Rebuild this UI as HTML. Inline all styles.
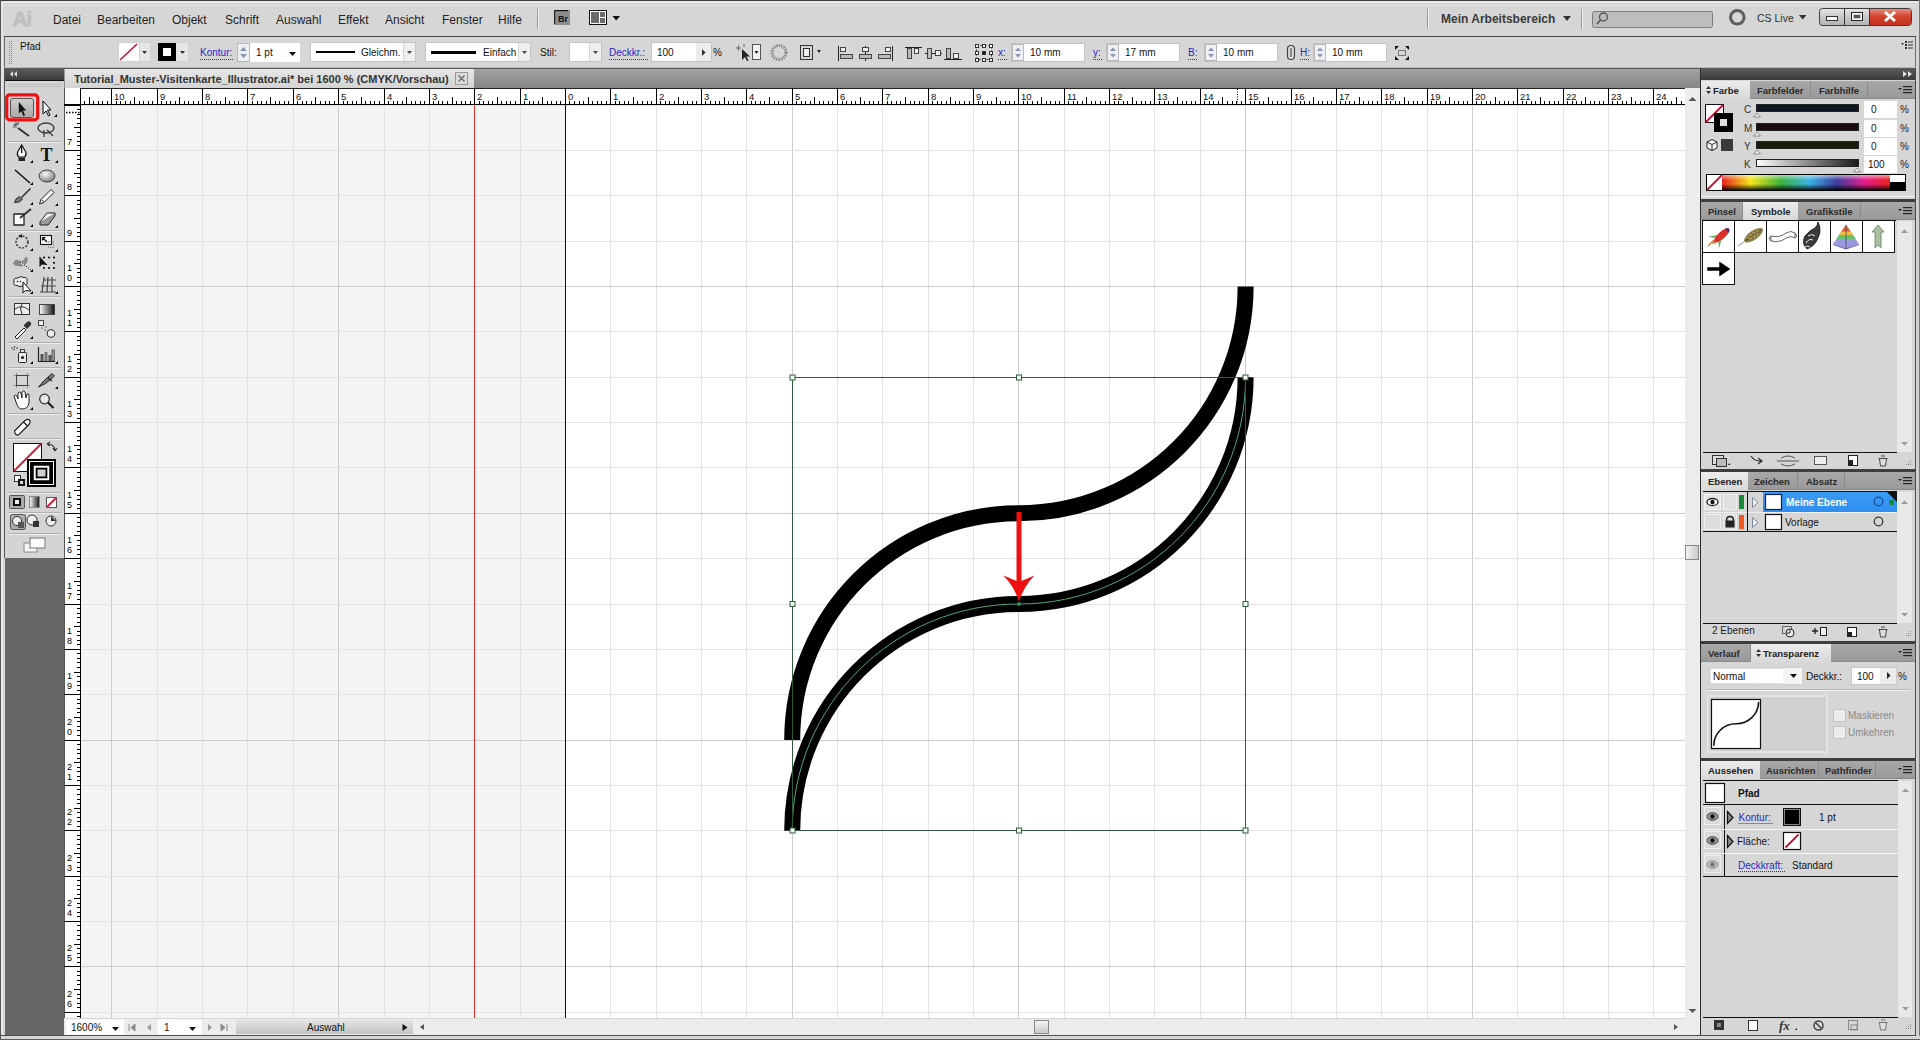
<!DOCTYPE html><html><head><meta charset="utf-8"><style>
html,body{margin:0;padding:0;width:1920px;height:1040px;overflow:hidden;background:#d6d6d6}
div{position:absolute;box-sizing:border-box}
.t{white-space:nowrap;font-family:"Liberation Sans",sans-serif;line-height:1}
body{font-family:"Liberation Sans",sans-serif}
</style></head><body>
<div style="left:0px;top:0px;width:1920px;height:1040px;background:#d6d6d6"></div>
<div style="left:0px;top:0px;width:1920px;height:1px;background:#3a3a3a"></div>
<div style="left:1px;top:1px;width:1918px;height:2px;background:#eaeaea"></div>
<div style="left:3px;top:5px;width:1913px;height:1px;background:#e4e4e4"></div>
<div style="left:0px;top:0px;width:1px;height:1040px;background:#555"></div>
<div style="left:1px;top:1px;width:2px;height:1034px;background:#e6e6e6"></div>
<div style="left:1919px;top:0px;width:1px;height:1040px;background:#777"></div>
<div class="t" style="left:53px;top:14px;font-size:12px;color:#1e1e1e">Datei</div>
<div class="t" style="left:97px;top:14px;font-size:12px;color:#1e1e1e">Bearbeiten</div>
<div class="t" style="left:172px;top:14px;font-size:12px;color:#1e1e1e">Objekt</div>
<div class="t" style="left:225px;top:14px;font-size:12px;color:#1e1e1e">Schrift</div>
<div class="t" style="left:276px;top:14px;font-size:12px;color:#1e1e1e">Auswahl</div>
<div class="t" style="left:338px;top:14px;font-size:12px;color:#1e1e1e">Effekt</div>
<div class="t" style="left:385px;top:14px;font-size:12px;color:#1e1e1e">Ansicht</div>
<div class="t" style="left:442px;top:14px;font-size:12px;color:#1e1e1e">Fenster</div>
<div class="t" style="left:498px;top:14px;font-size:12px;color:#1e1e1e">Hilfe</div>
<svg width="1920" height="68" viewBox="0 0 1920 68" style="position:absolute;left:0;top:0"><defs><linearGradient id="sb" x1="0" y1="0" x2="0" y2="1"><stop offset="0" stop-color="#b4b4b4"/><stop offset="1" stop-color="#cfcfcf"/></linearGradient><linearGradient id="wb" x1="0" y1="0" x2="0" y2="1"><stop offset="0" stop-color="#e6e6e6"/><stop offset="0.5" stop-color="#c9c9c9"/><stop offset="1" stop-color="#b2b2b2"/></linearGradient><linearGradient id="cb" x1="0" y1="0" x2="0" y2="1"><stop offset="0" stop-color="#e88a7a"/><stop offset="0.5" stop-color="#d2412c"/><stop offset="1" stop-color="#c2321e"/></linearGradient><linearGradient id="brg" x1="0" y1="0" x2="0" y2="1"><stop offset="0" stop-color="#9a9a9a"/><stop offset="1" stop-color="#6a6a6a"/></linearGradient></defs><text x="12.5" y="26" font-family="Liberation Sans" font-weight="bold" font-size="21" fill="#c2c2c2" stroke="#b0b0b0" stroke-width="0.4" letter-spacing="-1.5">Ai</text><rect x="537" y="9" width="1" height="20" fill="#9a9a9a"/><rect x="538" y="9" width="1" height="20" fill="#f0f0f0"/><rect x="554" y="10" width="16" height="15" fill="#8e8e8e"/><rect x="554" y="10" width="14" height="1.2" fill="#111"/><rect x="554" y="10" width="1.2" height="14" fill="#222"/><text x="558" y="21.5" font-family="Liberation Sans" font-weight="bold" font-size="9" fill="#111">Br</text><rect x="589.5" y="10.5" width="17" height="14" fill="#fff" stroke="#111"/><rect x="591" y="12" width="8" height="11" fill="#6a6a6a"/><rect x="600" y="12" width="5" height="5" fill="#6a6a6a"/><rect x="600" y="18" width="5" height="5" fill="#6a6a6a"/><path d="M612.5,16 L620,16 L616.2,20.5Z" fill="#111"/><rect x="1427" y="9" width="1" height="20" fill="#9a9a9a"/><rect x="1428" y="9" width="1" height="20" fill="#f0f0f0"/><path d="M1563,16 L1571,16 L1567,21Z" fill="#333"/><rect x="1581" y="9" width="1" height="20" fill="#9a9a9a"/><rect x="1582" y="9" width="1" height="20" fill="#f0f0f0"/><rect x="1592.5" y="11.5" width="120" height="16" rx="2" fill="#bdbdbd" stroke="#7c7c7c"/><circle cx="1603.5" cy="17" r="4" fill="none" stroke="#555" stroke-width="1.3"/><path d="M1600.5,20 L1597,24" stroke="#555" stroke-width="1.6"/><circle cx="1737.3" cy="17.3" r="6.8" fill="none" stroke="#5c5c5c" stroke-width="3"/><path d="M1799,15 L1806.5,15 L1802.7,19.5Z" fill="#333"/><rect x="1819.5" y="8.5" width="92" height="17" rx="3" fill="url(#wb)" stroke="#3c3c3c"/><path d="M1870,9 L1909,9 Q1911,9 1911,11 L1911,23 Q1911,25 1909,25 L1870,25Z" fill="url(#cb)"/><rect x="1844" y="9" width="1" height="16" fill="#333"/><rect x="1869" y="9" width="1" height="16" fill="#333"/><rect x="1826.5" y="16.5" width="11" height="4" fill="#fff" stroke="#333"/><rect x="1851.5" y="12.5" width="11" height="8" fill="none" stroke="#222" stroke-width="1"/><rect x="1852.5" y="13.5" width="9" height="6" fill="none" stroke="#fff" stroke-width="1"/><rect x="1854" y="15" width="6" height="3" fill="#555"/><path d="M1885,12 L1895,21 M1895,12 L1885,21" stroke="#fff" stroke-width="3"/><rect x="4" y="36" width="1912" height="1" fill="#484848"/><rect x="4" y="37" width="1" height="31" fill="#6a6a6a"/><rect x="1915" y="37" width="1" height="31" fill="#6a6a6a"/><rect x="4" y="67" width="1912" height="1" fill="#b8b8b8"/><rect x="9" y="41" width="1" height="1" fill="#888"/><rect x="11" y="41" width="1" height="1" fill="#888"/><rect x="9" y="43" width="1" height="1" fill="#888"/><rect x="11" y="43" width="1" height="1" fill="#888"/><rect x="9" y="45" width="1" height="1" fill="#888"/><rect x="11" y="45" width="1" height="1" fill="#888"/><rect x="9" y="47" width="1" height="1" fill="#888"/><rect x="11" y="47" width="1" height="1" fill="#888"/><rect x="9" y="49" width="1" height="1" fill="#888"/><rect x="11" y="49" width="1" height="1" fill="#888"/><rect x="9" y="51" width="1" height="1" fill="#888"/><rect x="11" y="51" width="1" height="1" fill="#888"/><rect x="9" y="53" width="1" height="1" fill="#888"/><rect x="11" y="53" width="1" height="1" fill="#888"/><rect x="9" y="55" width="1" height="1" fill="#888"/><rect x="11" y="55" width="1" height="1" fill="#888"/><rect x="9" y="57" width="1" height="1" fill="#888"/><rect x="11" y="57" width="1" height="1" fill="#888"/><rect x="9" y="59" width="1" height="1" fill="#888"/><rect x="11" y="59" width="1" height="1" fill="#888"/><rect x="9" y="61" width="1" height="1" fill="#888"/><rect x="11" y="61" width="1" height="1" fill="#888"/><rect x="9" y="63" width="1" height="1" fill="#888"/><rect x="11" y="63" width="1" height="1" fill="#888"/><text x="20" y="50" font-family="Liberation Sans" font-size="10" fill="#111">Pfad</text><rect x="118.5" y="42.5" width="32" height="19" fill="#e6e6e6" stroke="#c4c4c4" stroke-dasharray="1,1"/><rect x="119" y="43" width="20" height="18" fill="#fff"/><path d="M120,60 L137,44" stroke="#c8102e" stroke-width="1.6"/><rect x="139" y="43" width="1" height="18" fill="#cfcfcf"/><path d="M142,51 L147,51 L144.5,54Z" fill="#333"/><rect x="157.5" y="42.5" width="31" height="19" fill="#e6e6e6" stroke="#c4c4c4" stroke-dasharray="1,1"/><rect x="158" y="43" width="18" height="18" fill="#000"/><rect x="163" y="48" width="8" height="8" fill="#fff"/><path d="M180,51 L185,51 L182.5,54Z" fill="#333"/><text x="200" y="56" font-family="Liberation Sans" font-size="10" fill="#2929c8">Kontur:</text><path d="M200,59.5 L234,59.5" stroke="#2929c8" stroke-dasharray="1,1"/><rect x="237" y="43" width="63" height="19" fill="#fff"/><rect x="237.5" y="43.5" width="12" height="18" fill="#eef0f4" stroke="#b8b8b8"/><path d="M240,51 L247,51 L243.5,47Z M240,54 L247,54 L243.5,58Z" fill="#8a94b0"/><text x="256" y="56" font-family="Liberation Sans" font-size="10" fill="#111">1 pt</text><path d="M289,52 L296,52 L292.5,56Z" fill="#111"/><rect x="310.5" y="42.5" width="105" height="19" fill="#fff" stroke="#c4c4c4"/><rect x="316" y="51" width="39" height="2" fill="#000"/><text x="361" y="56" font-family="Liberation Sans" font-size="10" fill="#111">Gleichm.</text><rect x="403" y="43" width="1" height="18" fill="#d4d4d4"/><rect x="404" y="43" width="11" height="18" fill="#efefef"/><path d="M407,51 L412,51 L409.5,54Z" fill="#444"/><rect x="425.5" y="42.5" width="105" height="19" fill="#fff" stroke="#c4c4c4"/><rect x="431" y="51" width="45" height="3" fill="#000"/><text x="483" y="56" font-family="Liberation Sans" font-size="10" fill="#111">Einfach</text><rect x="518" y="43" width="1" height="18" fill="#d4d4d4"/><rect x="519" y="43" width="11" height="18" fill="#efefef"/><path d="M522,51 L527,51 L524.5,54Z" fill="#444"/><text x="540" y="56" font-family="Liberation Sans" font-size="10" fill="#111">Stil:</text><rect x="569.5" y="42.5" width="32" height="19" fill="#fff" stroke="#c4c4c4"/><rect x="589" y="43" width="1" height="18" fill="#d4d4d4"/><rect x="590" y="43" width="11" height="18" fill="#efefef"/><path d="M593,51 L598,51 L595.5,54Z" fill="#444"/><text x="609" y="56" font-family="Liberation Sans" font-size="10" fill="#2929c8">Deckkr.:</text><path d="M609,59.5 L648,59.5" stroke="#2929c8" stroke-dasharray="1,1"/><rect x="651.5" y="42.5" width="60" height="19" fill="#fff" stroke="#c4c4c4"/><rect x="696" y="43" width="15" height="18" fill="#ececec"/><path d="M702,49 L702,56 L705.5,52.5Z" fill="#333"/><text x="657" y="56" font-family="Liberation Sans" font-size="10" fill="#111">100</text><text x="713" y="56" font-family="Liberation Sans" font-size="10" fill="#111">%</text><path d="M736,48 L741,48 M738.5,45.5 L738.5,50.5 M744,44 L744,47" stroke="#666"/><path d="M742,49 L742,60 L745,57 L747,61 L748.5,60.5 L746.5,56.5 L750,56.5Z" fill="#222"/><rect x="752.5" y="44.5" width="8" height="15" fill="#f4f4f4" stroke="#555"/><path d="M754.5,51 L758.5,51 L756.5,54Z" fill="#222"/><circle cx="779" cy="52.5" r="7" fill="none" stroke="#8a8a8a" stroke-width="3" stroke-dasharray="1.5,1"/><rect x="800.5" y="45.5" width="12" height="14" fill="none" stroke="#333"/><rect x="803.5" y="48.5" width="6" height="8" fill="#eee" stroke="#333"/><path d="M817,50 L821,50 L819,53Z" fill="#222"/><rect x="838" y="46" width="1" height="15" fill="#222"/><rect x="840.5" y="47.5" width="5" height="4" fill="#eee" stroke="#444"/><rect x="840.5" y="54.5" width="12" height="4" fill="#bbb" stroke="#444"/><rect x="865" y="46" width="1" height="15" fill="#222"/><rect x="862.5" y="47.5" width="6" height="4" fill="#eee" stroke="#444"/><rect x="859.5" y="54.5" width="12" height="4" fill="#bbb" stroke="#444"/><rect x="892" y="46" width="1" height="15" fill="#222"/><rect x="885.5" y="47.5" width="5" height="4" fill="#eee" stroke="#444"/><rect x="878.5" y="54.5" width="12" height="4" fill="#bbb" stroke="#444"/><rect x="905" y="47" width="17" height="1" fill="#222"/><rect x="907.5" y="48.5" width="4" height="10" fill="#bbb" stroke="#444"/><rect x="914.5" y="48.5" width="4" height="5" fill="#eee" stroke="#444"/><rect x="925" y="53" width="17" height="1" fill="#222"/><rect x="927.5" y="48.5" width="4" height="10" fill="#bbb" stroke="#444"/><rect x="935.5" y="50.5" width="5" height="5" fill="#eee" stroke="#444"/><rect x="944" y="59" width="18" height="1" fill="#222"/><rect x="946.5" y="48.5" width="4" height="10" fill="#bbb" stroke="#444"/><rect x="953.5" y="53.5" width="5" height="5" fill="#eee" stroke="#444"/><rect x="976.5" y="45.5" width="15" height="14" fill="none" stroke="#333" stroke-dasharray="2,2"/><rect x="975.5" y="44.5" width="3" height="3" fill="#fff" stroke="#333"/><rect x="975.5" y="51.5" width="3" height="3" fill="#fff" stroke="#333"/><rect x="975.5" y="58.5" width="3" height="3" fill="#fff" stroke="#333"/><rect x="982.5" y="44.5" width="3" height="3" fill="#fff" stroke="#333"/><rect x="982.5" y="51.5" width="3" height="3" fill="#111" stroke="#333"/><rect x="982.5" y="58.5" width="3" height="3" fill="#fff" stroke="#333"/><rect x="989.5" y="44.5" width="3" height="3" fill="#fff" stroke="#333"/><rect x="989.5" y="51.5" width="3" height="3" fill="#fff" stroke="#333"/><rect x="989.5" y="58.5" width="3" height="3" fill="#fff" stroke="#333"/><text x="998" y="56" font-family="Liberation Sans" font-size="10" fill="#2929c8">x:</text><path d="M998,59.5 L1007,59.5" stroke="#2929c8" stroke-dasharray="1,1"/><rect x="1011.5" y="43.5" width="73" height="18" fill="#fff" stroke="#c4c4c4"/><rect x="1012.5" y="44.5" width="11" height="16" fill="#eef0f4" stroke="#b8b8b8"/><path d="M1015,51 L1021,51 L1018,47.5Z M1015,54 L1021,54 L1018,57.5Z" fill="#8a94b0"/><text x="1030" y="56" font-family="Liberation Sans" font-size="10" fill="#111">10 mm</text><text x="1093" y="56" font-family="Liberation Sans" font-size="10" fill="#2929c8">y:</text><path d="M1093,59.5 L1102,59.5" stroke="#2929c8" stroke-dasharray="1,1"/><rect x="1106.5" y="43.5" width="73" height="18" fill="#fff" stroke="#c4c4c4"/><rect x="1107.5" y="44.5" width="11" height="16" fill="#eef0f4" stroke="#b8b8b8"/><path d="M1110,51 L1116,51 L1113,47.5Z M1110,54 L1116,54 L1113,57.5Z" fill="#8a94b0"/><text x="1125" y="56" font-family="Liberation Sans" font-size="10" fill="#111">17 mm</text><text x="1188" y="56" font-family="Liberation Sans" font-size="10" fill="#2929c8">B:</text><path d="M1188,59.5 L1197,59.5" stroke="#2929c8" stroke-dasharray="1,1"/><rect x="1204.5" y="43.5" width="73" height="18" fill="#fff" stroke="#c4c4c4"/><rect x="1205.5" y="44.5" width="11" height="16" fill="#eef0f4" stroke="#b8b8b8"/><path d="M1208,51 L1214,51 L1211,47.5Z M1208,54 L1214,54 L1211,57.5Z" fill="#8a94b0"/><text x="1223" y="56" font-family="Liberation Sans" font-size="10" fill="#111">10 mm</text><text x="1300" y="56" font-family="Liberation Sans" font-size="10" fill="#2929c8">H:</text><path d="M1300,59.5 L1309,59.5" stroke="#2929c8" stroke-dasharray="1,1"/><rect x="1313.5" y="43.5" width="73" height="18" fill="#fff" stroke="#c4c4c4"/><rect x="1314.5" y="44.5" width="11" height="16" fill="#eef0f4" stroke="#b8b8b8"/><path d="M1317,51 L1323,51 L1320,47.5Z M1317,54 L1323,54 L1320,57.5Z" fill="#8a94b0"/><text x="1332" y="56" font-family="Liberation Sans" font-size="10" fill="#111">10 mm</text><rect x="1287.5" y="45.5" width="7" height="14" rx="3.5" fill="#ddd" stroke="#444" stroke-width="1.2"/><rect x="1290" y="48" width="2" height="9" fill="#888"/><path d="M1395,46 L1399,46 L1395,50Z M1409,46 L1405,46 L1409,50Z M1395,60 L1399,60 L1395,56Z M1409,60 L1405,60 L1409,56Z" fill="#111"/><rect x="1398.5" y="50.5" width="7" height="5" fill="none" stroke="#777"/><path d="M1901,43 L1904,43 L1902.5,45Z" fill="#333"/><rect x="1905" y="41" width="2" height="2" fill="#333"/><rect x="1908" y="41.5" width="5" height="1" fill="#333"/><rect x="1905" y="44" width="2" height="2" fill="#333"/><rect x="1908" y="44.5" width="5" height="1" fill="#333"/><rect x="1905" y="47" width="2" height="2" fill="#333"/><rect x="1908" y="47.5" width="5" height="1" fill="#333"/></svg>
<div class="t" style="left:1441px;top:13px;font-weight:bold;font-size:12px;color:#3a3a3a">Mein Arbeitsbereich</div>
<div class="t" style="left:1757px;top:13px;font-size:10.5px;color:#333">CS Live</div>
<div style="left:5px;top:558px;width:59px;height:477px;background:#666666"></div>
<svg width="60" height="490" viewBox="4 68 60 490" style="position:absolute;left:4px;top:68px"><defs><linearGradient id="tg" x1="0" y1="0" x2="0" y2="1"><stop offset="0" stop-color="#e8e8e8"/><stop offset="1" stop-color="#a8a8a8"/></linearGradient><linearGradient id="bg1" x1="0" y1="0" x2="0" y2="1"><stop offset="0" stop-color="#b8b8b8"/><stop offset="1" stop-color="#8e8e8e"/></linearGradient><radialGradient id="rg1" cx="0.4" cy="0.35" r="0.7"><stop offset="0" stop-color="#fafafa"/><stop offset="1" stop-color="#7a7a7a"/></radialGradient></defs><rect x="4" y="68" width="60" height="490" fill="#d4d4d4"/><rect x="4" y="68" width="1" height="490" fill="#5a5a5a"/><defs><linearGradient id="thd" x1="0" y1="0" x2="0" y2="1"><stop offset="0" stop-color="#5e5e5e"/><stop offset="1" stop-color="#3c3c3c"/></linearGradient><linearGradient id="selb" x1="0" y1="0" x2="0" y2="1"><stop offset="0" stop-color="#cfcfcf"/><stop offset="1" stop-color="#a9a9a9"/></linearGradient></defs><rect x="5" y="68" width="59" height="12" fill="url(#thd)"/><rect x="5" y="80" width="59" height="1" fill="#111"/><path d="M10,74 L13,71 L13,77Z M14,74 L17,71 L17,77Z" fill="#ddd"/><rect x="8" y="84" width="54" height="1" fill="#bdbdbd"/><rect x="8" y="86" width="54" height="1" fill="#bdbdbd"/><rect x="8" y="141" width="53" height="1" fill="#b0b0b0"/><rect x="8" y="142" width="53" height="1" fill="#ececec"/><rect x="8" y="230" width="53" height="1" fill="#b0b0b0"/><rect x="8" y="231" width="53" height="1" fill="#ececec"/><rect x="8" y="296" width="53" height="1" fill="#b0b0b0"/><rect x="8" y="297" width="53" height="1" fill="#ececec"/><rect x="8" y="342" width="53" height="1" fill="#b0b0b0"/><rect x="8" y="343" width="53" height="1" fill="#ececec"/><rect x="8" y="367" width="53" height="1" fill="#b0b0b0"/><rect x="8" y="368" width="53" height="1" fill="#ececec"/><rect x="8" y="413" width="53" height="1" fill="#b0b0b0"/><rect x="8" y="414" width="53" height="1" fill="#ececec"/><rect x="8" y="438" width="53" height="1" fill="#b0b0b0"/><rect x="8" y="439" width="53" height="1" fill="#ececec"/><rect x="8" y="492" width="53" height="1" fill="#b0b0b0"/><rect x="8" y="493" width="53" height="1" fill="#ececec"/><rect x="8" y="512" width="53" height="1" fill="#b0b0b0"/><rect x="8" y="513" width="53" height="1" fill="#ececec"/><rect x="8" y="533" width="53" height="1" fill="#b0b0b0"/><rect x="8" y="534" width="53" height="1" fill="#ececec"/><rect x="6.7" y="94.8" width="31" height="25" rx="3" fill="none" stroke="#f01010" stroke-width="3.2"/><rect x="10.5" y="98.5" width="23" height="19" rx="2.5" fill="url(#selb)" stroke="#555"/><path d="M18.8,102 L18.8,113.5 L21.3,111.2 L23.4,116 L25,115.2 L23,110.5 L26.2,110.5Z" fill="#111"/><path d="M43,101 L43,114 L46,111 L48.5,116 L50,115 L47.5,110 L51,110Z" fill="#fff" stroke="#000" stroke-width="1"/><path d="M54,117 L57,117 L57,114Z" fill="#000"/><path d="M18,128 L29,136" stroke="#333" stroke-width="2"/><path d="M13,125 L19,124 M16,121 L16,128 M13,128 L19,122" stroke="#555" stroke-width="1"/><ellipse cx="46" cy="128" rx="8" ry="5" fill="none" stroke="#333" stroke-width="1.3"/><path d="M44,130 L44,137 M47,130 L53,136" stroke="#333" stroke-width="1.2"/><path d="M21.7,145 L25.5,151.5 Q27,154.5 24.8,157 L18.6,157 Q16.4,154.5 17.9,151.5Z" fill="#fafafa" stroke="#111" stroke-width="1.2"/><path d="M21.7,146 L21.7,153" stroke="#111" stroke-width="1.3"/><rect x="18.5" y="157.5" width="6.5" height="3.5" fill="#222"/><path d="M30,163 L33,163 L33,160Z" fill="#000"/><text x="40.5" y="160.5" font-family="Liberation Serif" font-weight="bold" font-size="18" fill="#111">T</text><path d="M55,163 L58,163 L58,160Z" fill="#000"/><path d="M15,170 L30,183" stroke="#111" stroke-width="1.6"/><path d="M30,185 L33,185 L33,182Z" fill="#000"/><ellipse cx="47" cy="176" rx="8" ry="6" fill="url(#rg1)" stroke="#444"/><path d="M55,184 L58,184 L58,181Z" fill="#000"/><path d="M30.5,188.5 L21.5,197.5" stroke="#333" stroke-width="1.6"/><path d="M14.5,202.5 Q15,198.5 19.5,196.5 L22.5,199 Q20,203 14.5,202.5Z" fill="#777" stroke="#222" stroke-width="0.9"/><path d="M30,205 L33,205 L33,202Z" fill="#000"/><path d="M39.5,204 L41,199.5 L51,189.5 L54,192.5 L44,202.5Z" fill="#f4f4f4" stroke="#222" stroke-width="1"/><path d="M41.5,199.5 L44,202" stroke="#222" stroke-width="0.8"/><path d="M55,206 L58,206 L58,203Z" fill="#000"/><path d="M14,214 L24,214 L24,225 L14,225Z" fill="#fff" stroke="#222" stroke-width="1.3"/><path d="M20,218 L31,209" stroke="#333" stroke-width="2"/><path d="M30,227 L33,227 L33,224Z" fill="#000"/><path d="M40,222 L47,213 L55,213 L48,222Z" fill="#f6f6f6" stroke="#222"/><path d="M40,222 L40,225 L48,225 L55,216 L55,213" fill="#999" stroke="#222"/><path d="M55,228 L58,228 L58,225Z" fill="#000"/><circle cx="22" cy="242" r="6" fill="none" stroke="#333" stroke-width="1.5" stroke-dasharray="2,1.5"/><path d="M18,236 L22,234 L22,238Z" fill="#222"/><path d="M30,251 L33,251 L33,248Z" fill="#000"/><rect x="40.5" y="235.5" width="11" height="9" fill="#f6f6f6" stroke="#111" stroke-width="1.1"/><path d="M47,242 L42.5,237.5 M42.5,237.5 L42.5,240.5 M42.5,237.5 L45.5,237.5" stroke="#111" stroke-width="1.2" fill="none"/><rect x="48.5" y="241.5" width="5" height="6" fill="none" stroke="#777" stroke-dasharray="1,1"/><path d="M55,252 L58,252 L58,249Z" fill="#000"/><path d="M13,263.5 Q15,258 19.5,260.5 Q23,262.5 25,257.5 Q27.5,256 28,259 Q27,266 21.5,266.5 Q16.5,266 15,265.5Z" fill="#8a8a8a"/><path d="M20,262 L31,270" stroke="#fff" stroke-width="1.6"/><path d="M20,262 L31,270" stroke="#111" stroke-width="1.2" stroke-dasharray="1.2,1.2"/><path d="M30,272 L33,272 L33,269Z" fill="#000"/><path d="M39.5,257 L39.5,267 L42,264.5 L47,265 Z" fill="#111"/><path d="M39.5,257 L47,265" stroke="#111"/><circle cx="44" cy="257.5" r="1.1" fill="#111"/><circle cx="49" cy="257.5" r="1.1" fill="#111"/><circle cx="54" cy="257.5" r="1.1" fill="#111"/><circle cx="54" cy="262.8" r="1.1" fill="#111"/><circle cx="44" cy="268" r="1.1" fill="#111"/><circle cx="49" cy="268" r="1.1" fill="#111"/><circle cx="54" cy="268" r="1.1" fill="#111"/><path d="M14,282 Q13,277.5 18,278 Q20,275.5 24,277.5 Q28,277 27,281.5 Q28,286 23.5,285.5 Q20,288 17,285.5 Q13,286 14,282Z" fill="#eee" stroke="#222" stroke-width="1"/><circle cx="17.5" cy="281.5" r="0.8" fill="#111"/><circle cx="20.5" cy="281.5" r="0.8" fill="#111"/><path d="M23,282 L23,293 L25.5,290.5 L31,291Z" fill="#fff" stroke="#111" stroke-width="1"/><path d="M30,294 L33,294 L33,291Z" fill="#000"/><path d="M40,292 L56,292 M41,286 L56,286 M43,280 L56,280 M42,292 L44,277 M47,292 L48,277 M52,292 L52,277" stroke="#444" stroke-width="1.2" fill="none"/><path d="M55,294 L58,294 L58,291Z" fill="#000"/><rect x="14.5" y="303.5" width="15" height="11" fill="#eee" stroke="#333"/><path d="M15,309 Q22,304 29,310 M22,304 Q19,309 22,314" stroke="#333" fill="none"/><defs><linearGradient id="gr2"><stop offset="0" stop-color="#fff"/><stop offset="1" stop-color="#111"/></linearGradient></defs><rect x="39.5" y="304.5" width="15" height="10" fill="url(#gr2)" stroke="#444"/><path d="M15,337 L24,328 L26,330 L17,339Z" fill="#fff" stroke="#222" stroke-width="1"/><path d="M23.5,325.5 L27,322 Q29,320.5 30.5,322 Q32,323.5 30.5,325.5 L27,329Z" fill="#333"/><path d="M30,339 L33,339 L33,336Z" fill="#000"/><rect x="38.5" y="320.5" width="5" height="5" fill="#eee" stroke="#444"/><circle cx="42" cy="328" r="0.8" fill="#666"/><circle cx="45" cy="330" r="0.8" fill="#666"/><circle cx="46" cy="327" r="0.8" fill="#666"/><circle cx="48" cy="331" r="0.8" fill="#666"/><circle cx="51" cy="333.5" r="3.8" fill="#eee" stroke="#333" stroke-width="1.1"/><rect x="18.5" y="352.5" width="8" height="10" rx="1" fill="#eee" stroke="#222"/><rect x="20.5" y="349.5" width="4" height="3" fill="#ddd" stroke="#222" stroke-width="0.8"/><circle cx="22.5" cy="357.5" r="1.6" fill="#222"/><circle cx="12" cy="348" r="0.8" fill="#333"/><circle cx="14.5" cy="347" r="0.8" fill="#333"/><circle cx="14" cy="349.5" r="0.8" fill="#333"/><circle cx="17" cy="348" r="0.8" fill="#333"/><path d="M30,364 L33,364 L33,361Z" fill="#000"/><path d="M38.5,347 L38.5,361.5 L55,361.5" stroke="#222" stroke-width="1.2" fill="none"/><rect x="40.5" y="354" width="3" height="7" fill="#555"/><rect x="44.5" y="352" width="3" height="9" fill="#777"/><rect x="48.5" y="355" width="3" height="6" fill="#555"/><rect x="52" y="350" width="2.5" height="11" fill="#999" stroke="#333" stroke-width="0.6"/><path d="M55,364 L58,364 L58,361Z" fill="#000"/><rect x="16.5" y="375.5" width="11" height="10" fill="none" stroke="#222"/><path d="M14,375.5 L30,375.5 M14,385.5 L30,385.5 M16.5,373 L16.5,388 M27.5,373 L27.5,388" stroke="#555" stroke-width="0.6"/><path d="M38.5,387 Q44,380 48,377 L52,373.5 L54.5,376 L50,380 Q46,384 38.5,387Z" fill="#777" stroke="#222" stroke-width="0.9"/><path d="M48,377.5 L52,381" stroke="#222" stroke-width="1.3"/><path d="M55,389 L58,389 L58,386Z" fill="#000"/><path d="M16,402 L14,396 Q15,394 17,396 L18,399 L18,393 Q20,391 21,393 L22,398 L22,392 Q24,390 25,392 L26,398 L27,394 Q29,393 29,395 L29,403 Q28,409 22,409 Q18,409 16,402Z" fill="#fff" stroke="#222" stroke-width="1"/><path d="M30,410 L33,410 L33,407Z" fill="#000"/><circle cx="44.5" cy="399" r="4.8" fill="#e8e8e8" stroke="#333" stroke-width="1.3"/><path d="M48,402.5 L53.5,408" stroke="#222" stroke-width="2.2"/><path d="M14.5,431 L25,420.5 Q28,418.5 29.5,420 Q31,421.5 29,424.5 L18.5,435 Q15,435.5 14.5,431Z" fill="#fff" stroke="#222" stroke-width="1.2"/><path d="M23.5,422 L27.5,426" stroke="#222" stroke-width="1.2"/><rect x="13.5" y="443.5" width="28" height="28" fill="#fff" stroke="#111"/><path d="M14,471 L41,444" stroke="#d0213a" stroke-width="2"/><rect x="27" y="459" width="29" height="28" fill="#000"/><rect x="29.5" y="461.5" width="24" height="23" fill="none" stroke="#fff" stroke-width="1"/><rect x="34.5" y="466.5" width="14" height="13" fill="#9a9a9a" stroke="#fff" stroke-width="1.5"/><rect x="36" y="468" width="11" height="10" fill="#000"/><rect x="37.5" y="469.5" width="8" height="7" fill="#cfcfcf"/><path d="M48,444 Q54,444 55,450 M47,444 L50,442 M47,444 L50,446 M55,451 L53,448 M55,451 L57,448" stroke="#333" stroke-width="1.2" fill="none"/><rect x="14.5" y="475.5" width="6" height="6" fill="#fff" stroke="#333"/><rect x="18" y="479" width="7" height="7" fill="#111"/><rect x="20" y="481" width="3" height="3" fill="#ddd"/><rect x="9.5" y="495.5" width="15" height="13" rx="1" fill="#aaa" stroke="#555"/><rect x="13" y="498" width="8" height="8" fill="#111"/><rect x="15" y="500" width="4" height="4" fill="#eee"/><rect x="29.5" y="496.5" width="10" height="11" fill="url(#gr2)" stroke="#888"/><rect x="46.5" y="497.5" width="10" height="10" fill="#fff" stroke="#555"/><path d="M47,507 L56,498" stroke="#d0213a" stroke-width="2"/><rect x="10.5" y="514.5" width="15" height="15" rx="2" fill="#aaa" stroke="#555"/><circle cx="17" cy="521" r="4.5" fill="#eee" stroke="#333"/><rect x="18" y="522" width="6" height="6" fill="#555"/><circle cx="32" cy="520" r="5" fill="#eee" stroke="#333"/><rect x="33" y="521" width="6" height="6" fill="#333"/><circle cx="51" cy="521" r="5" fill="#eee" stroke="#333"/><path d="M51,516 L51,521 L56,521" fill="#333"/><rect x="24" y="543" width="13" height="9" fill="#f4f4f4" stroke="#888"/><rect x="30" y="538" width="15" height="10" fill="#fbfbfb" stroke="#777"/></svg>
<div style="left:64px;top:68px;width:1636px;height:20px;background:linear-gradient(#a2a2a2,#868686)"></div>
<div style="left:64px;top:68px;width:1636px;height:1px;background:#5a5a5a"></div>
<div style="left:65px;top:69px;width:409px;height:19px;background:linear-gradient(#e6e6e6,#d4d4d4)"></div>
<div class="t" style="left:74px;top:74px;font-size:11px;font-weight:bold;color:#333">Tutorial_Muster-Visitenkarte_Illustrator.ai* bei 1600 % (CMYK/Vorschau)</div>
<svg width="14" height="14" style="position:absolute;left:455px;top:72px"><rect x="0.5" y="0.5" width="12" height="12" fill="#dcdcdc" stroke="#9a9a9a"/><path d="M3.5,3.5 L9.5,9.5 M9.5,3.5 L3.5,9.5" stroke="#666" stroke-width="1.3"/></svg>
<svg width="1605" height="913" viewBox="81 105 1605 913" style="position:absolute;left:81px;top:105px" shape-rendering="crispEdges"><rect x="81" y="105" width="1605" height="913" fill="#f4f4f4"/><rect x="566" y="105" width="1120" height="913" fill="#ffffff"/><rect x="111" y="105" width="1" height="913" fill="#cdcdcd"/><rect x="157" y="105" width="1" height="913" fill="#e3e3e3"/><rect x="202" y="105" width="1" height="913" fill="#e3e3e3"/><rect x="247" y="105" width="1" height="913" fill="#e3e3e3"/><rect x="293" y="105" width="1" height="913" fill="#e3e3e3"/><rect x="338" y="105" width="1" height="913" fill="#cdcdcd"/><rect x="384" y="105" width="1" height="913" fill="#e3e3e3"/><rect x="429" y="105" width="1" height="913" fill="#e3e3e3"/><rect x="474" y="105" width="1" height="913" fill="#e3e3e3"/><rect x="520" y="105" width="1" height="913" fill="#e3e3e3"/><rect x="565" y="105" width="1" height="913" fill="#cdcdcd"/><rect x="610" y="105" width="1" height="913" fill="#e3e3e3"/><rect x="656" y="105" width="1" height="913" fill="#e3e3e3"/><rect x="701" y="105" width="1" height="913" fill="#e3e3e3"/><rect x="746" y="105" width="1" height="913" fill="#e3e3e3"/><rect x="792" y="105" width="1" height="913" fill="#cdcdcd"/><rect x="837" y="105" width="1" height="913" fill="#e3e3e3"/><rect x="882" y="105" width="1" height="913" fill="#e3e3e3"/><rect x="928" y="105" width="1" height="913" fill="#e3e3e3"/><rect x="973" y="105" width="1" height="913" fill="#e3e3e3"/><rect x="1018" y="105" width="1" height="913" fill="#cdcdcd"/><rect x="1064" y="105" width="1" height="913" fill="#e3e3e3"/><rect x="1109" y="105" width="1" height="913" fill="#e3e3e3"/><rect x="1154" y="105" width="1" height="913" fill="#e3e3e3"/><rect x="1200" y="105" width="1" height="913" fill="#e3e3e3"/><rect x="1245" y="105" width="1" height="913" fill="#cdcdcd"/><rect x="1291" y="105" width="1" height="913" fill="#e3e3e3"/><rect x="1336" y="105" width="1" height="913" fill="#e3e3e3"/><rect x="1381" y="105" width="1" height="913" fill="#e3e3e3"/><rect x="1427" y="105" width="1" height="913" fill="#e3e3e3"/><rect x="1472" y="105" width="1" height="913" fill="#cdcdcd"/><rect x="1517" y="105" width="1" height="913" fill="#e3e3e3"/><rect x="1563" y="105" width="1" height="913" fill="#e3e3e3"/><rect x="1608" y="105" width="1" height="913" fill="#e3e3e3"/><rect x="1653" y="105" width="1" height="913" fill="#e3e3e3"/><rect x="81" y="105" width="1605" height="1" fill="#e3e3e3"/><rect x="81" y="150" width="1605" height="1" fill="#e3e3e3"/><rect x="81" y="195" width="1605" height="1" fill="#e3e3e3"/><rect x="81" y="241" width="1605" height="1" fill="#e3e3e3"/><rect x="81" y="286" width="1605" height="1" fill="#cdcdcd"/><rect x="81" y="331" width="1605" height="1" fill="#e3e3e3"/><rect x="81" y="377" width="1605" height="1" fill="#e3e3e3"/><rect x="81" y="422" width="1605" height="1" fill="#e3e3e3"/><rect x="81" y="467" width="1605" height="1" fill="#e3e3e3"/><rect x="81" y="513" width="1605" height="1" fill="#cdcdcd"/><rect x="81" y="558" width="1605" height="1" fill="#e3e3e3"/><rect x="81" y="604" width="1605" height="1" fill="#e3e3e3"/><rect x="81" y="649" width="1605" height="1" fill="#e3e3e3"/><rect x="81" y="694" width="1605" height="1" fill="#e3e3e3"/><rect x="81" y="740" width="1605" height="1" fill="#cdcdcd"/><rect x="81" y="785" width="1605" height="1" fill="#e3e3e3"/><rect x="81" y="830" width="1605" height="1" fill="#e3e3e3"/><rect x="81" y="876" width="1605" height="1" fill="#e3e3e3"/><rect x="81" y="921" width="1605" height="1" fill="#e3e3e3"/><rect x="81" y="966" width="1605" height="1" fill="#cdcdcd"/><rect x="81" y="1012" width="1605" height="1" fill="#e3e3e3"/><rect x="474" y="105" width="1" height="913" fill="#e0302a"/><rect x="565" y="105" width="1" height="913" fill="#111"/></svg>
<svg width="1605" height="913" viewBox="81 105 1605 913" style="position:absolute;left:81px;top:105px"><path d="M792.2,740 C792.2,614.79359 893.69359,513.3 1018.9,513.3 C1144.1064099999999,513.3 1245.6,411.70641 1245.6,286.5" fill="none" stroke="#000" stroke-width="16"/><path d="M792.2,830.7 C792.2,705.49359 893.69359,604.0 1018.9,604.0 C1144.1064099999999,604.0 1245.6,502.40641 1245.6,377.2" fill="none" stroke="#000" stroke-width="16"/><path d="M792.2,830.7 C792.2,705.49359 893.69359,604.0 1018.9,604.0 C1144.1064099999999,604.0 1245.6,502.40641 1245.6,377.2" fill="none" stroke="#4fa878" stroke-width="1"/><rect x="792.5" y="377.5" width="453" height="453" fill="none" stroke="#2f5e3f" stroke-width="1"/><rect x="790.0" y="375.0" width="5" height="5" fill="#eef8f0" stroke="#2f5e3f" stroke-width="1"/><rect x="790.0" y="601.5" width="5" height="5" fill="#eef8f0" stroke="#2f5e3f" stroke-width="1"/><rect x="790.0" y="828.0" width="5" height="5" fill="#eef8f0" stroke="#2f5e3f" stroke-width="1"/><rect x="1016.5" y="375.0" width="5" height="5" fill="#eef8f0" stroke="#2f5e3f" stroke-width="1"/><rect x="1016.5" y="828.0" width="5" height="5" fill="#eef8f0" stroke="#2f5e3f" stroke-width="1"/><rect x="1243.0" y="375.0" width="5" height="5" fill="#eef8f0" stroke="#2f5e3f" stroke-width="1"/><rect x="1243.0" y="601.5" width="5" height="5" fill="#eef8f0" stroke="#2f5e3f" stroke-width="1"/><rect x="1243.0" y="828.0" width="5" height="5" fill="#eef8f0" stroke="#2f5e3f" stroke-width="1"/><rect x="1016.5" y="512" width="5" height="70" fill="#ee1111"/><path d="M1003.3,575.5 L1016.5,581 L1021.5,581 L1034.4,575.5 Q1024,586 1019,601.5 Q1014,586 1003.3,575.5Z" fill="#ee1111"/><circle cx="1019" cy="604" r="2" fill="#3a8a5a"/></svg>
<svg width="1622" height="17" viewBox="64 88 1622 17" style="position:absolute;left:64px;top:88px" shape-rendering="crispEdges"><rect x="64" y="88" width="1622" height="17" fill="#fff"/><rect x="64" y="104" width="1622" height="1" fill="#000"/><rect x="64" y="88" width="1622" height="1" fill="#222"/><rect x="80" y="88" width="1" height="17" fill="#000"/><rect x="84" y="101" width="1" height="3" fill="#000"/><rect x="89" y="97" width="1" height="7" fill="#000"/><rect x="93" y="101" width="1" height="3" fill="#000"/><rect x="98" y="101" width="1" height="3" fill="#000"/><rect x="102" y="101" width="1" height="3" fill="#000"/><rect x="107" y="101" width="1" height="3" fill="#000"/><rect x="111" y="88" width="1" height="16" fill="#000"/><rect x="116" y="101" width="1" height="3" fill="#000"/><rect x="120" y="101" width="1" height="3" fill="#000"/><rect x="125" y="101" width="1" height="3" fill="#000"/><rect x="130" y="101" width="1" height="3" fill="#000"/><rect x="134" y="97" width="1" height="7" fill="#000"/><rect x="139" y="101" width="1" height="3" fill="#000"/><rect x="143" y="101" width="1" height="3" fill="#000"/><rect x="148" y="101" width="1" height="3" fill="#000"/><rect x="152" y="101" width="1" height="3" fill="#000"/><rect x="157" y="88" width="1" height="16" fill="#000"/><rect x="161" y="101" width="1" height="3" fill="#000"/><rect x="166" y="101" width="1" height="3" fill="#000"/><rect x="170" y="101" width="1" height="3" fill="#000"/><rect x="175" y="101" width="1" height="3" fill="#000"/><rect x="179" y="97" width="1" height="7" fill="#000"/><rect x="184" y="101" width="1" height="3" fill="#000"/><rect x="188" y="101" width="1" height="3" fill="#000"/><rect x="193" y="101" width="1" height="3" fill="#000"/><rect x="198" y="101" width="1" height="3" fill="#000"/><rect x="202" y="88" width="1" height="16" fill="#000"/><rect x="207" y="101" width="1" height="3" fill="#000"/><rect x="211" y="101" width="1" height="3" fill="#000"/><rect x="216" y="101" width="1" height="3" fill="#000"/><rect x="220" y="101" width="1" height="3" fill="#000"/><rect x="225" y="97" width="1" height="7" fill="#000"/><rect x="229" y="101" width="1" height="3" fill="#000"/><rect x="234" y="101" width="1" height="3" fill="#000"/><rect x="238" y="101" width="1" height="3" fill="#000"/><rect x="243" y="101" width="1" height="3" fill="#000"/><rect x="247" y="88" width="1" height="16" fill="#000"/><rect x="252" y="101" width="1" height="3" fill="#000"/><rect x="257" y="101" width="1" height="3" fill="#000"/><rect x="261" y="101" width="1" height="3" fill="#000"/><rect x="266" y="101" width="1" height="3" fill="#000"/><rect x="270" y="97" width="1" height="7" fill="#000"/><rect x="275" y="101" width="1" height="3" fill="#000"/><rect x="279" y="101" width="1" height="3" fill="#000"/><rect x="284" y="101" width="1" height="3" fill="#000"/><rect x="288" y="101" width="1" height="3" fill="#000"/><rect x="293" y="88" width="1" height="16" fill="#000"/><rect x="297" y="101" width="1" height="3" fill="#000"/><rect x="302" y="101" width="1" height="3" fill="#000"/><rect x="306" y="101" width="1" height="3" fill="#000"/><rect x="311" y="101" width="1" height="3" fill="#000"/><rect x="315" y="97" width="1" height="7" fill="#000"/><rect x="320" y="101" width="1" height="3" fill="#000"/><rect x="325" y="101" width="1" height="3" fill="#000"/><rect x="329" y="101" width="1" height="3" fill="#000"/><rect x="334" y="101" width="1" height="3" fill="#000"/><rect x="338" y="88" width="1" height="16" fill="#000"/><rect x="343" y="101" width="1" height="3" fill="#000"/><rect x="347" y="101" width="1" height="3" fill="#000"/><rect x="352" y="101" width="1" height="3" fill="#000"/><rect x="356" y="101" width="1" height="3" fill="#000"/><rect x="361" y="97" width="1" height="7" fill="#000"/><rect x="365" y="101" width="1" height="3" fill="#000"/><rect x="370" y="101" width="1" height="3" fill="#000"/><rect x="374" y="101" width="1" height="3" fill="#000"/><rect x="379" y="101" width="1" height="3" fill="#000"/><rect x="384" y="88" width="1" height="16" fill="#000"/><rect x="388" y="101" width="1" height="3" fill="#000"/><rect x="393" y="101" width="1" height="3" fill="#000"/><rect x="397" y="101" width="1" height="3" fill="#000"/><rect x="402" y="101" width="1" height="3" fill="#000"/><rect x="406" y="97" width="1" height="7" fill="#000"/><rect x="411" y="101" width="1" height="3" fill="#000"/><rect x="415" y="101" width="1" height="3" fill="#000"/><rect x="420" y="101" width="1" height="3" fill="#000"/><rect x="424" y="101" width="1" height="3" fill="#000"/><rect x="429" y="88" width="1" height="16" fill="#000"/><rect x="433" y="101" width="1" height="3" fill="#000"/><rect x="438" y="101" width="1" height="3" fill="#000"/><rect x="442" y="101" width="1" height="3" fill="#000"/><rect x="447" y="101" width="1" height="3" fill="#000"/><rect x="452" y="97" width="1" height="7" fill="#000"/><rect x="456" y="101" width="1" height="3" fill="#000"/><rect x="461" y="101" width="1" height="3" fill="#000"/><rect x="465" y="101" width="1" height="3" fill="#000"/><rect x="470" y="101" width="1" height="3" fill="#000"/><rect x="474" y="88" width="1" height="16" fill="#000"/><rect x="479" y="101" width="1" height="3" fill="#000"/><rect x="483" y="101" width="1" height="3" fill="#000"/><rect x="488" y="101" width="1" height="3" fill="#000"/><rect x="492" y="101" width="1" height="3" fill="#000"/><rect x="497" y="97" width="1" height="7" fill="#000"/><rect x="501" y="101" width="1" height="3" fill="#000"/><rect x="506" y="101" width="1" height="3" fill="#000"/><rect x="510" y="101" width="1" height="3" fill="#000"/><rect x="515" y="101" width="1" height="3" fill="#000"/><rect x="520" y="88" width="1" height="16" fill="#000"/><rect x="524" y="101" width="1" height="3" fill="#000"/><rect x="529" y="101" width="1" height="3" fill="#000"/><rect x="533" y="101" width="1" height="3" fill="#000"/><rect x="538" y="101" width="1" height="3" fill="#000"/><rect x="542" y="97" width="1" height="7" fill="#000"/><rect x="547" y="101" width="1" height="3" fill="#000"/><rect x="551" y="101" width="1" height="3" fill="#000"/><rect x="556" y="101" width="1" height="3" fill="#000"/><rect x="560" y="101" width="1" height="3" fill="#000"/><rect x="565" y="88" width="1" height="16" fill="#000"/><rect x="569" y="101" width="1" height="3" fill="#000"/><rect x="574" y="101" width="1" height="3" fill="#000"/><rect x="579" y="101" width="1" height="3" fill="#000"/><rect x="583" y="101" width="1" height="3" fill="#000"/><rect x="588" y="97" width="1" height="7" fill="#000"/><rect x="592" y="101" width="1" height="3" fill="#000"/><rect x="597" y="101" width="1" height="3" fill="#000"/><rect x="601" y="101" width="1" height="3" fill="#000"/><rect x="606" y="101" width="1" height="3" fill="#000"/><rect x="610" y="88" width="1" height="16" fill="#000"/><rect x="615" y="101" width="1" height="3" fill="#000"/><rect x="619" y="101" width="1" height="3" fill="#000"/><rect x="624" y="101" width="1" height="3" fill="#000"/><rect x="628" y="101" width="1" height="3" fill="#000"/><rect x="633" y="97" width="1" height="7" fill="#000"/><rect x="637" y="101" width="1" height="3" fill="#000"/><rect x="642" y="101" width="1" height="3" fill="#000"/><rect x="647" y="101" width="1" height="3" fill="#000"/><rect x="651" y="101" width="1" height="3" fill="#000"/><rect x="656" y="88" width="1" height="16" fill="#000"/><rect x="660" y="101" width="1" height="3" fill="#000"/><rect x="665" y="101" width="1" height="3" fill="#000"/><rect x="669" y="101" width="1" height="3" fill="#000"/><rect x="674" y="101" width="1" height="3" fill="#000"/><rect x="678" y="97" width="1" height="7" fill="#000"/><rect x="683" y="101" width="1" height="3" fill="#000"/><rect x="687" y="101" width="1" height="3" fill="#000"/><rect x="692" y="101" width="1" height="3" fill="#000"/><rect x="696" y="101" width="1" height="3" fill="#000"/><rect x="701" y="88" width="1" height="16" fill="#000"/><rect x="705" y="101" width="1" height="3" fill="#000"/><rect x="710" y="101" width="1" height="3" fill="#000"/><rect x="715" y="101" width="1" height="3" fill="#000"/><rect x="719" y="101" width="1" height="3" fill="#000"/><rect x="724" y="97" width="1" height="7" fill="#000"/><rect x="728" y="101" width="1" height="3" fill="#000"/><rect x="733" y="101" width="1" height="3" fill="#000"/><rect x="737" y="101" width="1" height="3" fill="#000"/><rect x="742" y="101" width="1" height="3" fill="#000"/><rect x="746" y="88" width="1" height="16" fill="#000"/><rect x="751" y="101" width="1" height="3" fill="#000"/><rect x="755" y="101" width="1" height="3" fill="#000"/><rect x="760" y="101" width="1" height="3" fill="#000"/><rect x="764" y="101" width="1" height="3" fill="#000"/><rect x="769" y="97" width="1" height="7" fill="#000"/><rect x="774" y="101" width="1" height="3" fill="#000"/><rect x="778" y="101" width="1" height="3" fill="#000"/><rect x="783" y="101" width="1" height="3" fill="#000"/><rect x="787" y="101" width="1" height="3" fill="#000"/><rect x="792" y="88" width="1" height="16" fill="#000"/><rect x="796" y="101" width="1" height="3" fill="#000"/><rect x="801" y="101" width="1" height="3" fill="#000"/><rect x="805" y="101" width="1" height="3" fill="#000"/><rect x="810" y="101" width="1" height="3" fill="#000"/><rect x="814" y="97" width="1" height="7" fill="#000"/><rect x="819" y="101" width="1" height="3" fill="#000"/><rect x="823" y="101" width="1" height="3" fill="#000"/><rect x="828" y="101" width="1" height="3" fill="#000"/><rect x="832" y="101" width="1" height="3" fill="#000"/><rect x="837" y="88" width="1" height="16" fill="#000"/><rect x="842" y="101" width="1" height="3" fill="#000"/><rect x="846" y="101" width="1" height="3" fill="#000"/><rect x="851" y="101" width="1" height="3" fill="#000"/><rect x="855" y="101" width="1" height="3" fill="#000"/><rect x="860" y="97" width="1" height="7" fill="#000"/><rect x="864" y="101" width="1" height="3" fill="#000"/><rect x="869" y="101" width="1" height="3" fill="#000"/><rect x="873" y="101" width="1" height="3" fill="#000"/><rect x="878" y="101" width="1" height="3" fill="#000"/><rect x="882" y="88" width="1" height="16" fill="#000"/><rect x="887" y="101" width="1" height="3" fill="#000"/><rect x="891" y="101" width="1" height="3" fill="#000"/><rect x="896" y="101" width="1" height="3" fill="#000"/><rect x="900" y="101" width="1" height="3" fill="#000"/><rect x="905" y="97" width="1" height="7" fill="#000"/><rect x="910" y="101" width="1" height="3" fill="#000"/><rect x="914" y="101" width="1" height="3" fill="#000"/><rect x="919" y="101" width="1" height="3" fill="#000"/><rect x="923" y="101" width="1" height="3" fill="#000"/><rect x="928" y="88" width="1" height="16" fill="#000"/><rect x="932" y="101" width="1" height="3" fill="#000"/><rect x="937" y="101" width="1" height="3" fill="#000"/><rect x="941" y="101" width="1" height="3" fill="#000"/><rect x="946" y="101" width="1" height="3" fill="#000"/><rect x="950" y="97" width="1" height="7" fill="#000"/><rect x="955" y="101" width="1" height="3" fill="#000"/><rect x="959" y="101" width="1" height="3" fill="#000"/><rect x="964" y="101" width="1" height="3" fill="#000"/><rect x="969" y="101" width="1" height="3" fill="#000"/><rect x="973" y="88" width="1" height="16" fill="#000"/><rect x="978" y="101" width="1" height="3" fill="#000"/><rect x="982" y="101" width="1" height="3" fill="#000"/><rect x="987" y="101" width="1" height="3" fill="#000"/><rect x="991" y="101" width="1" height="3" fill="#000"/><rect x="996" y="97" width="1" height="7" fill="#000"/><rect x="1000" y="101" width="1" height="3" fill="#000"/><rect x="1005" y="101" width="1" height="3" fill="#000"/><rect x="1009" y="101" width="1" height="3" fill="#000"/><rect x="1014" y="101" width="1" height="3" fill="#000"/><rect x="1018" y="88" width="1" height="16" fill="#000"/><rect x="1023" y="101" width="1" height="3" fill="#000"/><rect x="1027" y="101" width="1" height="3" fill="#000"/><rect x="1032" y="101" width="1" height="3" fill="#000"/><rect x="1037" y="101" width="1" height="3" fill="#000"/><rect x="1041" y="97" width="1" height="7" fill="#000"/><rect x="1046" y="101" width="1" height="3" fill="#000"/><rect x="1050" y="101" width="1" height="3" fill="#000"/><rect x="1055" y="101" width="1" height="3" fill="#000"/><rect x="1059" y="101" width="1" height="3" fill="#000"/><rect x="1064" y="88" width="1" height="16" fill="#000"/><rect x="1068" y="101" width="1" height="3" fill="#000"/><rect x="1073" y="101" width="1" height="3" fill="#000"/><rect x="1077" y="101" width="1" height="3" fill="#000"/><rect x="1082" y="101" width="1" height="3" fill="#000"/><rect x="1086" y="97" width="1" height="7" fill="#000"/><rect x="1091" y="101" width="1" height="3" fill="#000"/><rect x="1095" y="101" width="1" height="3" fill="#000"/><rect x="1100" y="101" width="1" height="3" fill="#000"/><rect x="1105" y="101" width="1" height="3" fill="#000"/><rect x="1109" y="88" width="1" height="16" fill="#000"/><rect x="1114" y="101" width="1" height="3" fill="#000"/><rect x="1118" y="101" width="1" height="3" fill="#000"/><rect x="1123" y="101" width="1" height="3" fill="#000"/><rect x="1127" y="101" width="1" height="3" fill="#000"/><rect x="1132" y="97" width="1" height="7" fill="#000"/><rect x="1136" y="101" width="1" height="3" fill="#000"/><rect x="1141" y="101" width="1" height="3" fill="#000"/><rect x="1145" y="101" width="1" height="3" fill="#000"/><rect x="1150" y="101" width="1" height="3" fill="#000"/><rect x="1154" y="88" width="1" height="16" fill="#000"/><rect x="1159" y="101" width="1" height="3" fill="#000"/><rect x="1164" y="101" width="1" height="3" fill="#000"/><rect x="1168" y="101" width="1" height="3" fill="#000"/><rect x="1173" y="101" width="1" height="3" fill="#000"/><rect x="1177" y="97" width="1" height="7" fill="#000"/><rect x="1182" y="101" width="1" height="3" fill="#000"/><rect x="1186" y="101" width="1" height="3" fill="#000"/><rect x="1191" y="101" width="1" height="3" fill="#000"/><rect x="1195" y="101" width="1" height="3" fill="#000"/><rect x="1200" y="88" width="1" height="16" fill="#000"/><rect x="1204" y="101" width="1" height="3" fill="#000"/><rect x="1209" y="101" width="1" height="3" fill="#000"/><rect x="1213" y="101" width="1" height="3" fill="#000"/><rect x="1218" y="101" width="1" height="3" fill="#000"/><rect x="1222" y="97" width="1" height="7" fill="#000"/><rect x="1227" y="101" width="1" height="3" fill="#000"/><rect x="1232" y="101" width="1" height="3" fill="#000"/><rect x="1236" y="101" width="1" height="3" fill="#000"/><rect x="1241" y="101" width="1" height="3" fill="#000"/><rect x="1245" y="88" width="1" height="16" fill="#000"/><rect x="1250" y="101" width="1" height="3" fill="#000"/><rect x="1254" y="101" width="1" height="3" fill="#000"/><rect x="1259" y="101" width="1" height="3" fill="#000"/><rect x="1263" y="101" width="1" height="3" fill="#000"/><rect x="1268" y="97" width="1" height="7" fill="#000"/><rect x="1272" y="101" width="1" height="3" fill="#000"/><rect x="1277" y="101" width="1" height="3" fill="#000"/><rect x="1281" y="101" width="1" height="3" fill="#000"/><rect x="1286" y="101" width="1" height="3" fill="#000"/><rect x="1291" y="88" width="1" height="16" fill="#000"/><rect x="1295" y="101" width="1" height="3" fill="#000"/><rect x="1300" y="101" width="1" height="3" fill="#000"/><rect x="1304" y="101" width="1" height="3" fill="#000"/><rect x="1309" y="101" width="1" height="3" fill="#000"/><rect x="1313" y="97" width="1" height="7" fill="#000"/><rect x="1318" y="101" width="1" height="3" fill="#000"/><rect x="1322" y="101" width="1" height="3" fill="#000"/><rect x="1327" y="101" width="1" height="3" fill="#000"/><rect x="1331" y="101" width="1" height="3" fill="#000"/><rect x="1336" y="88" width="1" height="16" fill="#000"/><rect x="1340" y="101" width="1" height="3" fill="#000"/><rect x="1345" y="101" width="1" height="3" fill="#000"/><rect x="1349" y="101" width="1" height="3" fill="#000"/><rect x="1354" y="101" width="1" height="3" fill="#000"/><rect x="1359" y="97" width="1" height="7" fill="#000"/><rect x="1363" y="101" width="1" height="3" fill="#000"/><rect x="1368" y="101" width="1" height="3" fill="#000"/><rect x="1372" y="101" width="1" height="3" fill="#000"/><rect x="1377" y="101" width="1" height="3" fill="#000"/><rect x="1381" y="88" width="1" height="16" fill="#000"/><rect x="1386" y="101" width="1" height="3" fill="#000"/><rect x="1390" y="101" width="1" height="3" fill="#000"/><rect x="1395" y="101" width="1" height="3" fill="#000"/><rect x="1399" y="101" width="1" height="3" fill="#000"/><rect x="1404" y="97" width="1" height="7" fill="#000"/><rect x="1408" y="101" width="1" height="3" fill="#000"/><rect x="1413" y="101" width="1" height="3" fill="#000"/><rect x="1417" y="101" width="1" height="3" fill="#000"/><rect x="1422" y="101" width="1" height="3" fill="#000"/><rect x="1427" y="88" width="1" height="16" fill="#000"/><rect x="1431" y="101" width="1" height="3" fill="#000"/><rect x="1436" y="101" width="1" height="3" fill="#000"/><rect x="1440" y="101" width="1" height="3" fill="#000"/><rect x="1445" y="101" width="1" height="3" fill="#000"/><rect x="1449" y="97" width="1" height="7" fill="#000"/><rect x="1454" y="101" width="1" height="3" fill="#000"/><rect x="1458" y="101" width="1" height="3" fill="#000"/><rect x="1463" y="101" width="1" height="3" fill="#000"/><rect x="1467" y="101" width="1" height="3" fill="#000"/><rect x="1472" y="88" width="1" height="16" fill="#000"/><rect x="1476" y="101" width="1" height="3" fill="#000"/><rect x="1481" y="101" width="1" height="3" fill="#000"/><rect x="1486" y="101" width="1" height="3" fill="#000"/><rect x="1490" y="101" width="1" height="3" fill="#000"/><rect x="1495" y="97" width="1" height="7" fill="#000"/><rect x="1499" y="101" width="1" height="3" fill="#000"/><rect x="1504" y="101" width="1" height="3" fill="#000"/><rect x="1508" y="101" width="1" height="3" fill="#000"/><rect x="1513" y="101" width="1" height="3" fill="#000"/><rect x="1517" y="88" width="1" height="16" fill="#000"/><rect x="1522" y="101" width="1" height="3" fill="#000"/><rect x="1526" y="101" width="1" height="3" fill="#000"/><rect x="1531" y="101" width="1" height="3" fill="#000"/><rect x="1535" y="101" width="1" height="3" fill="#000"/><rect x="1540" y="97" width="1" height="7" fill="#000"/><rect x="1544" y="101" width="1" height="3" fill="#000"/><rect x="1549" y="101" width="1" height="3" fill="#000"/><rect x="1554" y="101" width="1" height="3" fill="#000"/><rect x="1558" y="101" width="1" height="3" fill="#000"/><rect x="1563" y="88" width="1" height="16" fill="#000"/><rect x="1567" y="101" width="1" height="3" fill="#000"/><rect x="1572" y="101" width="1" height="3" fill="#000"/><rect x="1576" y="101" width="1" height="3" fill="#000"/><rect x="1581" y="101" width="1" height="3" fill="#000"/><rect x="1585" y="97" width="1" height="7" fill="#000"/><rect x="1590" y="101" width="1" height="3" fill="#000"/><rect x="1594" y="101" width="1" height="3" fill="#000"/><rect x="1599" y="101" width="1" height="3" fill="#000"/><rect x="1603" y="101" width="1" height="3" fill="#000"/><rect x="1608" y="88" width="1" height="16" fill="#000"/><rect x="1612" y="101" width="1" height="3" fill="#000"/><rect x="1617" y="101" width="1" height="3" fill="#000"/><rect x="1622" y="101" width="1" height="3" fill="#000"/><rect x="1626" y="101" width="1" height="3" fill="#000"/><rect x="1631" y="97" width="1" height="7" fill="#000"/><rect x="1635" y="101" width="1" height="3" fill="#000"/><rect x="1640" y="101" width="1" height="3" fill="#000"/><rect x="1644" y="101" width="1" height="3" fill="#000"/><rect x="1649" y="101" width="1" height="3" fill="#000"/><rect x="1653" y="88" width="1" height="16" fill="#000"/><rect x="1658" y="101" width="1" height="3" fill="#000"/><rect x="1662" y="101" width="1" height="3" fill="#000"/><rect x="1667" y="101" width="1" height="3" fill="#000"/><rect x="1671" y="101" width="1" height="3" fill="#000"/><rect x="1676" y="97" width="1" height="7" fill="#000"/><rect x="1681" y="101" width="1" height="3" fill="#000"/></svg>
<div class="t" style="left:114px;top:91.5px;font-size:9.5px;color:#111">10</div>
<div class="t" style="left:160px;top:91.5px;font-size:9.5px;color:#111">9</div>
<div class="t" style="left:205px;top:91.5px;font-size:9.5px;color:#111">8</div>
<div class="t" style="left:250px;top:91.5px;font-size:9.5px;color:#111">7</div>
<div class="t" style="left:296px;top:91.5px;font-size:9.5px;color:#111">6</div>
<div class="t" style="left:341px;top:91.5px;font-size:9.5px;color:#111">5</div>
<div class="t" style="left:387px;top:91.5px;font-size:9.5px;color:#111">4</div>
<div class="t" style="left:432px;top:91.5px;font-size:9.5px;color:#111">3</div>
<div class="t" style="left:477px;top:91.5px;font-size:9.5px;color:#111">2</div>
<div class="t" style="left:523px;top:91.5px;font-size:9.5px;color:#111">1</div>
<div class="t" style="left:568px;top:91.5px;font-size:9.5px;color:#111">0</div>
<div class="t" style="left:613px;top:91.5px;font-size:9.5px;color:#111">1</div>
<div class="t" style="left:659px;top:91.5px;font-size:9.5px;color:#111">2</div>
<div class="t" style="left:704px;top:91.5px;font-size:9.5px;color:#111">3</div>
<div class="t" style="left:749px;top:91.5px;font-size:9.5px;color:#111">4</div>
<div class="t" style="left:795px;top:91.5px;font-size:9.5px;color:#111">5</div>
<div class="t" style="left:840px;top:91.5px;font-size:9.5px;color:#111">6</div>
<div class="t" style="left:885px;top:91.5px;font-size:9.5px;color:#111">7</div>
<div class="t" style="left:931px;top:91.5px;font-size:9.5px;color:#111">8</div>
<div class="t" style="left:976px;top:91.5px;font-size:9.5px;color:#111">9</div>
<div class="t" style="left:1021px;top:91.5px;font-size:9.5px;color:#111">10</div>
<div class="t" style="left:1067px;top:91.5px;font-size:9.5px;color:#111">11</div>
<div class="t" style="left:1112px;top:91.5px;font-size:9.5px;color:#111">12</div>
<div class="t" style="left:1157px;top:91.5px;font-size:9.5px;color:#111">13</div>
<div class="t" style="left:1203px;top:91.5px;font-size:9.5px;color:#111">14</div>
<div class="t" style="left:1248px;top:91.5px;font-size:9.5px;color:#111">15</div>
<div class="t" style="left:1294px;top:91.5px;font-size:9.5px;color:#111">16</div>
<div class="t" style="left:1339px;top:91.5px;font-size:9.5px;color:#111">17</div>
<div class="t" style="left:1384px;top:91.5px;font-size:9.5px;color:#111">18</div>
<div class="t" style="left:1430px;top:91.5px;font-size:9.5px;color:#111">19</div>
<div class="t" style="left:1475px;top:91.5px;font-size:9.5px;color:#111">20</div>
<div class="t" style="left:1520px;top:91.5px;font-size:9.5px;color:#111">21</div>
<div class="t" style="left:1566px;top:91.5px;font-size:9.5px;color:#111">22</div>
<div class="t" style="left:1611px;top:91.5px;font-size:9.5px;color:#111">23</div>
<div class="t" style="left:1656px;top:91.5px;font-size:9.5px;color:#111">24</div>
<svg width="17" height="913" viewBox="64 105 17 913" style="position:absolute;left:64px;top:105px" shape-rendering="crispEdges"><rect x="64" y="105" width="17" height="913" fill="#fff"/><rect x="64" y="105" width="1" height="913" fill="#555"/><rect x="80" y="105" width="1" height="913" fill="#000"/><rect x="64" y="105" width="16" height="1" fill="#000"/><rect x="77" y="109" width="3" height="1" fill="#000"/><rect x="77" y="114" width="3" height="1" fill="#000"/><rect x="77" y="118" width="3" height="1" fill="#000"/><rect x="77" y="123" width="3" height="1" fill="#000"/><rect x="74" y="127" width="6" height="1" fill="#000"/><rect x="77" y="132" width="3" height="1" fill="#000"/><rect x="77" y="136" width="3" height="1" fill="#000"/><rect x="77" y="141" width="3" height="1" fill="#000"/><rect x="77" y="145" width="3" height="1" fill="#000"/><rect x="64" y="150" width="16" height="1" fill="#000"/><rect x="77" y="155" width="3" height="1" fill="#000"/><rect x="77" y="159" width="3" height="1" fill="#000"/><rect x="77" y="164" width="3" height="1" fill="#000"/><rect x="77" y="168" width="3" height="1" fill="#000"/><rect x="74" y="173" width="6" height="1" fill="#000"/><rect x="77" y="177" width="3" height="1" fill="#000"/><rect x="77" y="182" width="3" height="1" fill="#000"/><rect x="77" y="186" width="3" height="1" fill="#000"/><rect x="77" y="191" width="3" height="1" fill="#000"/><rect x="64" y="195" width="16" height="1" fill="#000"/><rect x="77" y="200" width="3" height="1" fill="#000"/><rect x="77" y="204" width="3" height="1" fill="#000"/><rect x="77" y="209" width="3" height="1" fill="#000"/><rect x="77" y="213" width="3" height="1" fill="#000"/><rect x="74" y="218" width="6" height="1" fill="#000"/><rect x="77" y="223" width="3" height="1" fill="#000"/><rect x="77" y="227" width="3" height="1" fill="#000"/><rect x="77" y="232" width="3" height="1" fill="#000"/><rect x="77" y="236" width="3" height="1" fill="#000"/><rect x="64" y="241" width="16" height="1" fill="#000"/><rect x="77" y="245" width="3" height="1" fill="#000"/><rect x="77" y="250" width="3" height="1" fill="#000"/><rect x="77" y="254" width="3" height="1" fill="#000"/><rect x="77" y="259" width="3" height="1" fill="#000"/><rect x="74" y="263" width="6" height="1" fill="#000"/><rect x="77" y="268" width="3" height="1" fill="#000"/><rect x="77" y="272" width="3" height="1" fill="#000"/><rect x="77" y="277" width="3" height="1" fill="#000"/><rect x="77" y="282" width="3" height="1" fill="#000"/><rect x="64" y="286" width="16" height="1" fill="#000"/><rect x="77" y="291" width="3" height="1" fill="#000"/><rect x="77" y="295" width="3" height="1" fill="#000"/><rect x="77" y="300" width="3" height="1" fill="#000"/><rect x="77" y="304" width="3" height="1" fill="#000"/><rect x="74" y="309" width="6" height="1" fill="#000"/><rect x="77" y="313" width="3" height="1" fill="#000"/><rect x="77" y="318" width="3" height="1" fill="#000"/><rect x="77" y="322" width="3" height="1" fill="#000"/><rect x="77" y="327" width="3" height="1" fill="#000"/><rect x="64" y="331" width="16" height="1" fill="#000"/><rect x="77" y="336" width="3" height="1" fill="#000"/><rect x="77" y="340" width="3" height="1" fill="#000"/><rect x="77" y="345" width="3" height="1" fill="#000"/><rect x="77" y="350" width="3" height="1" fill="#000"/><rect x="74" y="354" width="6" height="1" fill="#000"/><rect x="77" y="359" width="3" height="1" fill="#000"/><rect x="77" y="363" width="3" height="1" fill="#000"/><rect x="77" y="368" width="3" height="1" fill="#000"/><rect x="77" y="372" width="3" height="1" fill="#000"/><rect x="64" y="377" width="16" height="1" fill="#000"/><rect x="77" y="381" width="3" height="1" fill="#000"/><rect x="77" y="386" width="3" height="1" fill="#000"/><rect x="77" y="390" width="3" height="1" fill="#000"/><rect x="77" y="395" width="3" height="1" fill="#000"/><rect x="74" y="399" width="6" height="1" fill="#000"/><rect x="77" y="404" width="3" height="1" fill="#000"/><rect x="77" y="408" width="3" height="1" fill="#000"/><rect x="77" y="413" width="3" height="1" fill="#000"/><rect x="77" y="418" width="3" height="1" fill="#000"/><rect x="64" y="422" width="16" height="1" fill="#000"/><rect x="77" y="427" width="3" height="1" fill="#000"/><rect x="77" y="431" width="3" height="1" fill="#000"/><rect x="77" y="436" width="3" height="1" fill="#000"/><rect x="77" y="440" width="3" height="1" fill="#000"/><rect x="74" y="445" width="6" height="1" fill="#000"/><rect x="77" y="449" width="3" height="1" fill="#000"/><rect x="77" y="454" width="3" height="1" fill="#000"/><rect x="77" y="458" width="3" height="1" fill="#000"/><rect x="77" y="463" width="3" height="1" fill="#000"/><rect x="64" y="467" width="16" height="1" fill="#000"/><rect x="77" y="472" width="3" height="1" fill="#000"/><rect x="77" y="477" width="3" height="1" fill="#000"/><rect x="77" y="481" width="3" height="1" fill="#000"/><rect x="77" y="486" width="3" height="1" fill="#000"/><rect x="74" y="490" width="6" height="1" fill="#000"/><rect x="77" y="495" width="3" height="1" fill="#000"/><rect x="77" y="499" width="3" height="1" fill="#000"/><rect x="77" y="504" width="3" height="1" fill="#000"/><rect x="77" y="508" width="3" height="1" fill="#000"/><rect x="64" y="513" width="16" height="1" fill="#000"/><rect x="77" y="517" width="3" height="1" fill="#000"/><rect x="77" y="522" width="3" height="1" fill="#000"/><rect x="77" y="526" width="3" height="1" fill="#000"/><rect x="77" y="531" width="3" height="1" fill="#000"/><rect x="74" y="535" width="6" height="1" fill="#000"/><rect x="77" y="540" width="3" height="1" fill="#000"/><rect x="77" y="545" width="3" height="1" fill="#000"/><rect x="77" y="549" width="3" height="1" fill="#000"/><rect x="77" y="554" width="3" height="1" fill="#000"/><rect x="64" y="558" width="16" height="1" fill="#000"/><rect x="77" y="563" width="3" height="1" fill="#000"/><rect x="77" y="567" width="3" height="1" fill="#000"/><rect x="77" y="572" width="3" height="1" fill="#000"/><rect x="77" y="576" width="3" height="1" fill="#000"/><rect x="74" y="581" width="6" height="1" fill="#000"/><rect x="77" y="585" width="3" height="1" fill="#000"/><rect x="77" y="590" width="3" height="1" fill="#000"/><rect x="77" y="594" width="3" height="1" fill="#000"/><rect x="77" y="599" width="3" height="1" fill="#000"/><rect x="64" y="604" width="16" height="1" fill="#000"/><rect x="77" y="608" width="3" height="1" fill="#000"/><rect x="77" y="613" width="3" height="1" fill="#000"/><rect x="77" y="617" width="3" height="1" fill="#000"/><rect x="77" y="622" width="3" height="1" fill="#000"/><rect x="74" y="626" width="6" height="1" fill="#000"/><rect x="77" y="631" width="3" height="1" fill="#000"/><rect x="77" y="635" width="3" height="1" fill="#000"/><rect x="77" y="640" width="3" height="1" fill="#000"/><rect x="77" y="644" width="3" height="1" fill="#000"/><rect x="64" y="649" width="16" height="1" fill="#000"/><rect x="77" y="653" width="3" height="1" fill="#000"/><rect x="77" y="658" width="3" height="1" fill="#000"/><rect x="77" y="662" width="3" height="1" fill="#000"/><rect x="77" y="667" width="3" height="1" fill="#000"/><rect x="74" y="672" width="6" height="1" fill="#000"/><rect x="77" y="676" width="3" height="1" fill="#000"/><rect x="77" y="681" width="3" height="1" fill="#000"/><rect x="77" y="685" width="3" height="1" fill="#000"/><rect x="77" y="690" width="3" height="1" fill="#000"/><rect x="64" y="694" width="16" height="1" fill="#000"/><rect x="77" y="699" width="3" height="1" fill="#000"/><rect x="77" y="703" width="3" height="1" fill="#000"/><rect x="77" y="708" width="3" height="1" fill="#000"/><rect x="77" y="712" width="3" height="1" fill="#000"/><rect x="74" y="717" width="6" height="1" fill="#000"/><rect x="77" y="721" width="3" height="1" fill="#000"/><rect x="77" y="726" width="3" height="1" fill="#000"/><rect x="77" y="730" width="3" height="1" fill="#000"/><rect x="77" y="735" width="3" height="1" fill="#000"/><rect x="64" y="740" width="16" height="1" fill="#000"/><rect x="77" y="744" width="3" height="1" fill="#000"/><rect x="77" y="749" width="3" height="1" fill="#000"/><rect x="77" y="753" width="3" height="1" fill="#000"/><rect x="77" y="758" width="3" height="1" fill="#000"/><rect x="74" y="762" width="6" height="1" fill="#000"/><rect x="77" y="767" width="3" height="1" fill="#000"/><rect x="77" y="771" width="3" height="1" fill="#000"/><rect x="77" y="776" width="3" height="1" fill="#000"/><rect x="77" y="780" width="3" height="1" fill="#000"/><rect x="64" y="785" width="16" height="1" fill="#000"/><rect x="77" y="789" width="3" height="1" fill="#000"/><rect x="77" y="794" width="3" height="1" fill="#000"/><rect x="77" y="799" width="3" height="1" fill="#000"/><rect x="77" y="803" width="3" height="1" fill="#000"/><rect x="74" y="808" width="6" height="1" fill="#000"/><rect x="77" y="812" width="3" height="1" fill="#000"/><rect x="77" y="817" width="3" height="1" fill="#000"/><rect x="77" y="821" width="3" height="1" fill="#000"/><rect x="77" y="826" width="3" height="1" fill="#000"/><rect x="64" y="830" width="16" height="1" fill="#000"/><rect x="77" y="835" width="3" height="1" fill="#000"/><rect x="77" y="839" width="3" height="1" fill="#000"/><rect x="77" y="844" width="3" height="1" fill="#000"/><rect x="77" y="848" width="3" height="1" fill="#000"/><rect x="74" y="853" width="6" height="1" fill="#000"/><rect x="77" y="857" width="3" height="1" fill="#000"/><rect x="77" y="862" width="3" height="1" fill="#000"/><rect x="77" y="867" width="3" height="1" fill="#000"/><rect x="77" y="871" width="3" height="1" fill="#000"/><rect x="64" y="876" width="16" height="1" fill="#000"/><rect x="77" y="880" width="3" height="1" fill="#000"/><rect x="77" y="885" width="3" height="1" fill="#000"/><rect x="77" y="889" width="3" height="1" fill="#000"/><rect x="77" y="894" width="3" height="1" fill="#000"/><rect x="74" y="898" width="6" height="1" fill="#000"/><rect x="77" y="903" width="3" height="1" fill="#000"/><rect x="77" y="907" width="3" height="1" fill="#000"/><rect x="77" y="912" width="3" height="1" fill="#000"/><rect x="77" y="916" width="3" height="1" fill="#000"/><rect x="64" y="921" width="16" height="1" fill="#000"/><rect x="77" y="925" width="3" height="1" fill="#000"/><rect x="77" y="930" width="3" height="1" fill="#000"/><rect x="77" y="935" width="3" height="1" fill="#000"/><rect x="77" y="939" width="3" height="1" fill="#000"/><rect x="74" y="944" width="6" height="1" fill="#000"/><rect x="77" y="948" width="3" height="1" fill="#000"/><rect x="77" y="953" width="3" height="1" fill="#000"/><rect x="77" y="957" width="3" height="1" fill="#000"/><rect x="77" y="962" width="3" height="1" fill="#000"/><rect x="64" y="966" width="16" height="1" fill="#000"/><rect x="77" y="971" width="3" height="1" fill="#000"/><rect x="77" y="975" width="3" height="1" fill="#000"/><rect x="77" y="980" width="3" height="1" fill="#000"/><rect x="77" y="984" width="3" height="1" fill="#000"/><rect x="74" y="989" width="6" height="1" fill="#000"/><rect x="77" y="994" width="3" height="1" fill="#000"/><rect x="77" y="998" width="3" height="1" fill="#000"/><rect x="77" y="1003" width="3" height="1" fill="#000"/><rect x="77" y="1007" width="3" height="1" fill="#000"/><rect x="64" y="1012" width="16" height="1" fill="#000"/><rect x="77" y="1016" width="3" height="1" fill="#000"/></svg>
<div class="t" style="left:67px;top:138px;font-size:9px;color:#000">7</div>
<div class="t" style="left:67px;top:183px;font-size:9px;color:#000">8</div>
<div class="t" style="left:67px;top:229px;font-size:9px;color:#000">9</div>
<div class="t" style="left:67px;top:274px;font-size:9px;color:#000">0</div>
<div class="t" style="left:67px;top:264px;font-size:9px;color:#000">1</div>
<div class="t" style="left:67px;top:319px;font-size:9px;color:#000">1</div>
<div class="t" style="left:67px;top:309px;font-size:9px;color:#000">1</div>
<div class="t" style="left:67px;top:365px;font-size:9px;color:#000">2</div>
<div class="t" style="left:67px;top:355px;font-size:9px;color:#000">1</div>
<div class="t" style="left:67px;top:410px;font-size:9px;color:#000">3</div>
<div class="t" style="left:67px;top:400px;font-size:9px;color:#000">1</div>
<div class="t" style="left:67px;top:455px;font-size:9px;color:#000">4</div>
<div class="t" style="left:67px;top:445px;font-size:9px;color:#000">1</div>
<div class="t" style="left:67px;top:501px;font-size:9px;color:#000">5</div>
<div class="t" style="left:67px;top:491px;font-size:9px;color:#000">1</div>
<div class="t" style="left:67px;top:546px;font-size:9px;color:#000">6</div>
<div class="t" style="left:67px;top:536px;font-size:9px;color:#000">1</div>
<div class="t" style="left:67px;top:592px;font-size:9px;color:#000">7</div>
<div class="t" style="left:67px;top:582px;font-size:9px;color:#000">1</div>
<div class="t" style="left:67px;top:637px;font-size:9px;color:#000">8</div>
<div class="t" style="left:67px;top:627px;font-size:9px;color:#000">1</div>
<div class="t" style="left:67px;top:682px;font-size:9px;color:#000">9</div>
<div class="t" style="left:67px;top:672px;font-size:9px;color:#000">1</div>
<div class="t" style="left:67px;top:728px;font-size:9px;color:#000">0</div>
<div class="t" style="left:67px;top:718px;font-size:9px;color:#000">2</div>
<div class="t" style="left:67px;top:773px;font-size:9px;color:#000">1</div>
<div class="t" style="left:67px;top:763px;font-size:9px;color:#000">2</div>
<div class="t" style="left:67px;top:818px;font-size:9px;color:#000">2</div>
<div class="t" style="left:67px;top:808px;font-size:9px;color:#000">2</div>
<div class="t" style="left:67px;top:864px;font-size:9px;color:#000">3</div>
<div class="t" style="left:67px;top:854px;font-size:9px;color:#000">2</div>
<div class="t" style="left:67px;top:909px;font-size:9px;color:#000">4</div>
<div class="t" style="left:67px;top:899px;font-size:9px;color:#000">2</div>
<div class="t" style="left:67px;top:954px;font-size:9px;color:#000">5</div>
<div class="t" style="left:67px;top:944px;font-size:9px;color:#000">2</div>
<div class="t" style="left:67px;top:1000px;font-size:9px;color:#000">6</div>
<div class="t" style="left:67px;top:990px;font-size:9px;color:#000">2</div>
<svg width="16" height="948" viewBox="1685 88 16 948" style="position:absolute;left:1685px;top:88px"><rect x="1685" y="88" width="15" height="931" fill="#ececec"/><path d="M1688.5,101 L1692.5,97 L1696.5,101Z" fill="#555"/><path d="M1688.5,1009 L1692.5,1013 L1696.5,1009Z" fill="#555"/><defs><linearGradient id="th" x1="0" y1="0" x2="1" y2="0"><stop offset="0" stop-color="#f6f6f6"/><stop offset="1" stop-color="#c8c8c8"/></linearGradient><linearGradient id="th2" x1="0" y1="0" x2="0" y2="1"><stop offset="0" stop-color="#f6f6f6"/><stop offset="1" stop-color="#c8c8c8"/></linearGradient><linearGradient id="stg" x1="0" y1="0" x2="0" y2="1"><stop offset="0" stop-color="#e4e4e4"/><stop offset="1" stop-color="#c4c4c4"/></linearGradient></defs><rect x="1685.5" y="545.5" width="13" height="14" fill="url(#th)" stroke="#888"/></svg>
<svg width="1636" height="21" viewBox="64 1019 1636 21" style="position:absolute;left:64px;top:1019px"><rect x="64" y="1019" width="1636" height="16" fill="#ececec"/><rect x="66" y="1019.5" width="58" height="15" fill="#fff"/><text x="71" y="1031" font-family="Liberation Sans" font-size="10" fill="#111">1600%</text><path d="M112,1027 L119,1027 L115.5,1031Z" fill="#111"/><path d="M129,1024 L129,1031 M135,1024 L131,1027.5 L135,1031Z" stroke="#888" fill="#888"/><path d="M151,1024 L147,1027.5 L151,1031Z" fill="#999"/><rect x="157.5" y="1019.5" width="44" height="15" fill="#fff"/><text x="164" y="1031" font-family="Liberation Sans" font-size="10" fill="#111">1</text><path d="M189,1027 L196,1027 L192.5,1031Z" fill="#111"/><path d="M208,1024 L212,1027.5 L208,1031Z" fill="#999"/><path d="M221,1024 L225,1027.5 L221,1031Z M227,1024 L227,1031" stroke="#888" fill="#888"/><rect x="236" y="1020" width="177" height="14" fill="url(#stg)"/><text x="307" y="1031" font-family="Liberation Sans" font-size="10" fill="#111">Auswahl</text><path d="M402.5,1024 L407.5,1027.5 L402.5,1031Z" fill="#111"/><path d="M424,1024 L420,1027 L424,1030Z" fill="#555"/><path d="M1674,1024 L1678,1027 L1674,1030Z" fill="#555"/><rect x="1034.5" y="1020.5" width="14" height="13" fill="url(#th2)" stroke="#888"/><rect x="64" y="1035" width="1636" height="1" fill="#505050"/><rect x="64" y="1036" width="1636" height="3" fill="#d8d8d8"/><rect x="64" y="1039" width="1636" height="1" fill="#5a5a5a"/></svg>
<div style="left:0px;top:1035px;width:64px;height:1px;background:#505050"></div>
<div style="left:0px;top:1039px;width:64px;height:1px;background:#5a5a5a"></div>
<svg width="17" height="17" style="position:absolute;left:64px;top:88px"><rect x="0" y="0" width="17" height="17" fill="#fff"/><rect x="0" y="0" width="1" height="17" fill="#555"/><rect x="16" y="0" width="1" height="17" fill="#000"/><rect x="0" y="16" width="17" height="1" fill="#000"/></svg>
<svg width="16" height="3" style="position:absolute;left:65px;top:111px"><path d="M1,1.5 L15,1.5" stroke="#000" stroke-width="1.5" stroke-dasharray="1.5,1.5"/></svg>
<svg width="3" height="16" style="position:absolute;left:1236px;top:88px"><path d="M1.5,1 L1.5,15" stroke="#000" stroke-width="1" stroke-dasharray="1,1.5"/></svg>
<svg width="220" height="972" viewBox="1700 68 220 972" style="position:absolute;left:1700px;top:68px"><defs><linearGradient id="hd" x1="0" y1="0" x2="0" y2="1"><stop offset="0" stop-color="#5c5c5c"/><stop offset="1" stop-color="#3a3a3a"/></linearGradient><linearGradient id="tabA" x1="0" y1="0" x2="0" y2="1"><stop offset="0" stop-color="#ececec"/><stop offset="1" stop-color="#d8d8d8"/></linearGradient><linearGradient id="tabI" x1="0" y1="0" x2="0" y2="1"><stop offset="0" stop-color="#a8a8a8"/><stop offset="1" stop-color="#9a9a9a"/></linearGradient><linearGradient id="spec" x1="0" y1="0" x2="1" y2="0"><stop offset="0" stop-color="#e8201c"/><stop offset="0.17" stop-color="#f6e61c"/><stop offset="0.35" stop-color="#3cb43c"/><stop offset="0.52" stop-color="#3cb4e6"/><stop offset="0.68" stop-color="#3c3ca0"/><stop offset="0.85" stop-color="#e61e8c"/><stop offset="1" stop-color="#e8201c"/></linearGradient><linearGradient id="specV" x1="0" y1="0" x2="0" y2="1"><stop offset="0" stop-color="#fff" stop-opacity="0.55"/><stop offset="0.35" stop-color="#fff" stop-opacity="0"/><stop offset="0.6" stop-color="#000" stop-opacity="0"/><stop offset="1" stop-color="#000" stop-opacity="0.85"/></linearGradient><linearGradient id="kgrad" x1="0" y1="0" x2="1" y2="0"><stop offset="0" stop-color="#fff"/><stop offset="1" stop-color="#1a1a1a"/></linearGradient><linearGradient id="blueG" x1="0" y1="0" x2="0" y2="1"><stop offset="0" stop-color="#3a9cf6"/><stop offset="1" stop-color="#2f8ef0"/></linearGradient><radialGradient id="eye" cx="0.5" cy="0.5" r="0.5"><stop offset="0" stop-color="#000"/><stop offset="0.5" stop-color="#333"/><stop offset="1" stop-color="#999"/></radialGradient></defs><rect x="1700" y="68" width="220" height="972" fill="#d6d6d6" /><rect x="1700" y="68" width="1" height="968" fill="#2e2e2e" /><rect x="1915" y="68" width="1" height="968" fill="#4a4a4a" /><rect x="1916" y="36" width="4" height="1004" fill="#d0d0d0" /><rect x="1919" y="0" width="1" height="1040" fill="#777" /><rect x="1701" y="68" width="214" height="12" fill="url(#hd)" /><path d="M1903,71 L1907,74 L1903,77Z M1908,71 L1912,74 L1908,77Z" fill="#e0e0e0"/><rect x="1701" y="81" width="214" height="17" fill="url(#tabI)" /><rect x="1701" y="98" width="214" height="1" fill="#8a8a8a" /><rect x="1701" y="81" width="49" height="18" fill="url(#tabA)" /><path d="M1706,89 L1708.5,86 L1711,89Z M1706,91 L1708.5,94 L1711,91Z" fill="#333"/><text x="1713" y="93.5" font-family="Liberation Sans" font-size="9.5" font-weight="bold" fill="#222" >Farbe</text><rect x="1810" y="82" width="1" height="15" fill="#8a8a8a" /><text x="1757" y="93.5" font-family="Liberation Sans" font-size="9.5" font-weight="bold" fill="#2a2a2a" >Farbfelder</text><rect x="1867" y="82" width="1" height="15" fill="#8a8a8a" /><text x="1819" y="93.5" font-family="Liberation Sans" font-size="9.5" font-weight="bold" fill="#2a2a2a" >Farbhilfe</text><path d="M1898,88 L1902,88 L1900,90Z" fill="#222"/><rect x="1903" y="86" width="9" height="1.2" fill="#222" /><rect x="1903" y="89" width="9" height="1.2" fill="#222" /><rect x="1903" y="92" width="9" height="1.2" fill="#222" /><rect x="1705.5" y="104.5" width="18" height="18" fill="#fff" stroke="#111" stroke-width="1"/><path d="M1706,122 L1723,105" stroke="#c8102e" stroke-width="1.8"/><rect x="1714" y="113" width="19" height="19" fill="#000" /><rect x="1720" y="119" width="7" height="7" fill="#ddd" /><path d="M1707,142 L1712,139.5 L1717,142 L1717,148 L1712,150.5 L1707,148Z" fill="#fff" stroke="#222" stroke-width="1"/><path d="M1707,142 L1712,144.5 L1717,142 M1712,144.5 L1712,150.5" stroke="#222" fill="none"/><rect x="1721" y="139" width="12" height="12" fill="#3a3a3a" /><text x="1744" y="113" font-family="Liberation Sans" font-size="10" font-weight="normal" fill="#333" >C</text><rect x="1756.5" y="104.5" width="102" height="7" fill="#0a1520" stroke="#222" stroke-width="1"/><path d="M1753.5,117 L1757,113 L1760.5,117Z" fill="#eee" stroke="#777" stroke-width="0.8"/><rect x="1864" y="101" width="33" height="17" fill="#fff" /><text x="1871" y="113" font-family="Liberation Sans" font-size="10" font-weight="normal" fill="#111" >0</text><text x="1900" y="113" font-family="Liberation Sans" font-size="10" font-weight="normal" fill="#222" >%</text><text x="1744" y="132" font-family="Liberation Sans" font-size="10" font-weight="normal" fill="#333" >M</text><rect x="1756.5" y="123.5" width="102" height="7" fill="#1a0a10" stroke="#222" stroke-width="1"/><path d="M1753.5,136 L1757,132 L1760.5,136Z" fill="#eee" stroke="#777" stroke-width="0.8"/><rect x="1864" y="120" width="33" height="17" fill="#fff" /><text x="1871" y="132" font-family="Liberation Sans" font-size="10" font-weight="normal" fill="#111" >0</text><text x="1900" y="132" font-family="Liberation Sans" font-size="10" font-weight="normal" fill="#222" >%</text><text x="1744" y="150" font-family="Liberation Sans" font-size="10" font-weight="normal" fill="#333" >Y</text><rect x="1756.5" y="141.5" width="102" height="7" fill="#151a0a" stroke="#222" stroke-width="1"/><path d="M1753.5,154 L1757,150 L1760.5,154Z" fill="#eee" stroke="#777" stroke-width="0.8"/><rect x="1864" y="138" width="33" height="17" fill="#fff" /><text x="1871" y="150" font-family="Liberation Sans" font-size="10" font-weight="normal" fill="#111" >0</text><text x="1900" y="150" font-family="Liberation Sans" font-size="10" font-weight="normal" fill="#222" >%</text><text x="1744" y="168" font-family="Liberation Sans" font-size="10" font-weight="normal" fill="#333" >K</text><rect x="1756.5" y="159.5" width="102" height="7" fill="url(#kgrad)" stroke="#222" stroke-width="1"/><path d="M1853.5,172 L1857,168 L1860.5,172Z" fill="#eee" stroke="#777" stroke-width="0.8"/><rect x="1864" y="156" width="33" height="17" fill="#fff" /><text x="1868" y="168" font-family="Liberation Sans" font-size="10" font-weight="normal" fill="#111" >100</text><text x="1900" y="168" font-family="Liberation Sans" font-size="10" font-weight="normal" fill="#222" >%</text><rect x="1706" y="174" width="200" height="17" fill="#000" /><rect x="1722" y="175" width="168" height="15" fill="url(#spec)" /><rect x="1722" y="175" width="168" height="15" fill="url(#specV)" /><rect x="1890" y="175" width="15" height="7" fill="#fff" /><rect x="1707" y="175" width="15" height="15" fill="#fff" /><path d="M1707,190 L1722,175" stroke="#c8102e" stroke-width="1.8"/><rect x="1701" y="196" width="214" height="1" fill="#f0f0f0" /><rect x="1701" y="199" width="214" height="3" fill="#3e3e3e" /><rect x="1701" y="202" width="214" height="17" fill="url(#tabI)" /><rect x="1701" y="219" width="214" height="1" fill="#8a8a8a" /><rect x="1742" y="203" width="1" height="15" fill="#8a8a8a" /><text x="1708" y="214.5" font-family="Liberation Sans" font-size="9.5" font-weight="bold" fill="#2a2a2a" >Pinsel</text><rect x="1743" y="202" width="55" height="18" fill="url(#tabA)" /><text x="1751" y="214.5" font-family="Liberation Sans" font-size="9.5" font-weight="bold" fill="#222" >Symbole</text><rect x="1860" y="203" width="1" height="15" fill="#8a8a8a" /><text x="1806" y="214.5" font-family="Liberation Sans" font-size="9.5" font-weight="bold" fill="#2a2a2a" >Grafikstile</text><path d="M1898,209 L1902,209 L1900,211Z" fill="#222"/><rect x="1903" y="207" width="9" height="1.2" fill="#222" /><rect x="1903" y="210" width="9" height="1.2" fill="#222" /><rect x="1903" y="213" width="9" height="1.2" fill="#222" /><rect x="1703" y="220" width="193" height="1" fill="#111" /><rect x="1703" y="221" width="31" height="31" fill="#fff" /><rect x="1735" y="221" width="31" height="31" fill="#fff" /><rect x="1767" y="221" width="31" height="31" fill="#fff" /><rect x="1799" y="221" width="31" height="31" fill="#fff" /><rect x="1831" y="221" width="31" height="31" fill="#fff" /><rect x="1863" y="221" width="31" height="31" fill="#fff" /><rect x="1703" y="253" width="31" height="31" fill="#fff" /><rect x="1702" y="220" width="1" height="33" fill="#111" /><rect x="1734" y="220" width="1" height="33" fill="#111" /><rect x="1766" y="220" width="1" height="33" fill="#111" /><rect x="1798" y="220" width="1" height="33" fill="#111" /><rect x="1830" y="220" width="1" height="33" fill="#111" /><rect x="1862" y="220" width="1" height="33" fill="#111" /><rect x="1894" y="220" width="1" height="33" fill="#111" /><rect x="1703" y="252" width="192" height="1" fill="#111" /><rect x="1734" y="253" width="1" height="32" fill="#111" /><rect x="1703" y="284" width="32" height="1" fill="#111" /><rect x="1702" y="253" width="1" height="32" fill="#111" /><g transform="rotate(-42 1721 236)"><path d="M1709,236 L1712,234 L1712,238Z" fill="#e07a30"/><ellipse cx="1722" cy="236" rx="10" ry="3.6" fill="#d8302a"/><path d="M1729,233 Q1734,236 1729,239Z" fill="#2a3a8a"/><path d="M1715,233 L1711,228 L1719,233Z M1715,239 L1711,244 L1719,239Z" fill="#5aa85a"/></g><path d="M1708,246 L1714,240" stroke="#e07a30" stroke-width="1.5"/><g transform="rotate(-35 1751 237)"><ellipse cx="1754" cy="237" rx="11" ry="4.5" fill="#8a7a40"/><path d="M1744,237 L1765,237" stroke="#4a4020" stroke-width="0.8"/><path d="M1747,235 L1749,237 M1751,234 L1753,237 M1755,234 L1757,237 M1759,235 L1761,237 M1749,239 L1751,237 M1753,240 L1755,237 M1757,240 L1759,237" stroke="#c8b878" stroke-width="0.7"/></g><path d="M1738,246 L1744,242" stroke="#aaa" stroke-width="1.2"/><path d="M1771,236 Q1780,238 1786,233 Q1791,230 1795,233 L1795,238 Q1791,235 1786,238 Q1780,243 1771,241Z" fill="#fff" stroke="#555" stroke-width="0.9"/><path d="M1771,236 L1769,238 L1771,241 M1795,233 L1797,236 L1795,238" fill="none" stroke="#555" stroke-width="0.9"/><path d="M1807,249 Q1801,243 1805,236 Q1810,230 1815,228 Q1818,225 1818,222 Q1822,230 1818,238 Q1815,246 1807,249Z" fill="#3a3a3a" stroke="#111" stroke-width="0.8"/><path d="M1806,243 Q1809,238 1813,240 M1808,236 Q1812,233 1815,236 M1805,247 Q1808,245 1810,247" stroke="#eee" stroke-width="1" fill="none"/><path d="M1846,225 L1833,244 L1846,248 L1859,244Z" fill="#9a9ae0"/><path d="M1846,225 L1836.3,239 L1855.7,239Z" fill="#6ac06a"/><path d="M1846,225 L1839,235 L1853,235Z" fill="#f0c040"/><path d="M1846,225 L1841.5,231.5 L1850.5,231.5Z" fill="#e05a3a"/><path d="M1833,244 L1846,248 L1859,244 L1859,245 L1846,249.5 L1833,245Z" fill="#6a6ac0"/><path d="M1846,225 L1846,249" stroke="#556" stroke-width="0.9"/><path d="M1878,225 L1884,232 L1881,232 L1881,248 L1878,245 L1875,248 L1875,232 L1872,232Z" fill="#a8c0a0" stroke="#6a7a6a" stroke-width="0.8"/><path d="M1708,268 L1720,268 L1720,263 L1729,269 L1720,275 L1720,270 L1708,270Z" fill="#000" stroke="#000" stroke-width="1.5"/><rect x="1897" y="221" width="15" height="231" fill="#e8e8e8" /><path d="M1901,233 L1904.5,229.5 L1908,233Z" fill="#999"/><path d="M1901,442 L1904.5,445.5 L1908,442Z" fill="#999"/><rect x="1703" y="452" width="194" height="1" fill="#111" /><rect x="1712.5" y="455.5" width="11" height="9" fill="#ddd" stroke="#333"/><rect x="1716.5" y="458.5" width="10" height="8" fill="#bbb" stroke="#333"/><path d="M1728,465 L1730,465 L1730,463Z" fill="#000"/><path d="M1751,456 Q1755,462 1762,461 M1758,458 L1762,461 L1758,464" stroke="#333" stroke-width="1.3" fill="none"/><path d="M1777,461 L1799,461 M1781,458 Q1788,454 1795,458 M1781,464 Q1788,468 1795,464" stroke="#555" fill="none"/><rect x="1814.5" y="456.5" width="12" height="8" fill="#eee" stroke="#555"/><rect x="1848.5" y="455.5" width="9" height="10" fill="#fff" stroke="#222"/><rect x="1848" y="460" width="5" height="6" fill="#222"/><path d="M1878.5,458.5 L1887.5,458.5 M1879.5,459 L1880.5,466 L1885.5,466 L1886.5,459 M1881,456 L1885,456" stroke="#444" fill="#ddd"/><rect x="1910" y="460" width="1" height="1" fill="#888" /><rect x="1910" y="462" width="1" height="1" fill="#888" /><rect x="1908" y="462" width="1" height="1" fill="#888" /><rect x="1910" y="464" width="1" height="1" fill="#888" /><rect x="1908" y="464" width="1" height="1" fill="#888" /><rect x="1906" y="464" width="1" height="1" fill="#888" /><rect x="1701" y="469" width="214" height="3" fill="#3e3e3e" /><rect x="1701" y="472" width="214" height="17" fill="url(#tabI)" /><rect x="1701" y="489" width="214" height="1" fill="#8a8a8a" /><rect x="1701" y="472" width="47" height="18" fill="url(#tabA)" /><text x="1708" y="484.5" font-family="Liberation Sans" font-size="9.5" font-weight="bold" fill="#222" >Ebenen</text><rect x="1797" y="473" width="1" height="15" fill="#8a8a8a" /><text x="1754" y="484.5" font-family="Liberation Sans" font-size="9.5" font-weight="bold" fill="#2a2a2a" >Zeichen</text><rect x="1844" y="473" width="1" height="15" fill="#8a8a8a" /><text x="1806" y="484.5" font-family="Liberation Sans" font-size="9.5" font-weight="bold" fill="#2a2a2a" >Absatz</text><path d="M1898,479 L1902,479 L1900,481Z" fill="#222"/><rect x="1903" y="477" width="9" height="1.2" fill="#222" /><rect x="1903" y="480" width="9" height="1.2" fill="#222" /><rect x="1903" y="483" width="9" height="1.2" fill="#222" /><rect x="1703" y="491" width="194" height="1" fill="#111" /><rect x="1703" y="492" width="194" height="20" fill="#d6d6d6" /><rect x="1704.5" y="494.5" width="16" height="15" fill="#e4e4e4" stroke="#f4f4f4"/><ellipse cx="1712.5" cy="502" rx="5.5" ry="3.5" fill="#fff" stroke="#222" stroke-width="1.3"/><circle cx="1712.5" cy="502" r="2.2" fill="#111"/><rect x="1723.5" y="494.5" width="13" height="15" fill="#e0e0e0" stroke="#f0f0f0"/><rect x="1739" y="495" width="5" height="14" fill="#1a8a3a" /><rect x="1747" y="492" width="1" height="40" fill="#111" /><path d="M1752.5,497.5 L1758,502.5 L1752.5,507.5Z" fill="#f0f0f0" stroke="#7a8aa0" stroke-width="1"/><rect x="1763" y="492" width="134" height="20" fill="url(#blueG)" /><path d="M1887,492 L1897,492 L1897,502Z" fill="#111"/><rect x="1765.5" y="494.5" width="16" height="15" fill="#fff" stroke="#102040" stroke-width="1.2"/><text x="1786" y="505.5" font-family="Liberation Sans" font-size="10" font-weight="bold" fill="#fff" >Meine Ebene</text><circle cx="1878.5" cy="501.5" r="4.3" fill="none" stroke="#1a4a8a" stroke-width="1.2"/><rect x="1889" y="500" width="5" height="5" fill="#1a8a3a" /><rect x="1703" y="512" width="44" height="1" fill="#f0f0f0" /><rect x="1748" y="512" width="149" height="1" fill="#f0f0f0" /><rect x="1704.5" y="514.5" width="16" height="15" fill="#dcdcdc" stroke="#efefef"/><rect x="1723.5" y="514.5" width="13" height="15" fill="#dcdcdc" stroke="#efefef"/><path d="M1726.5,521 Q1726.5,516.5 1730,516.5 Q1733.5,516.5 1733.5,521" fill="none" stroke="#222" stroke-width="1.5"/><rect x="1725.5" y="520.5" width="9" height="7" fill="#222"/><rect x="1739" y="515" width="5" height="14" fill="#f05a1e" /><path d="M1752.5,517.5 L1758,522.5 L1752.5,527.5Z" fill="#f0f0f0" stroke="#7a8aa0" stroke-width="1"/><rect x="1765.5" y="514.5" width="16" height="15" fill="#fff" stroke="#111" stroke-width="1.2"/><text x="1785" y="525.5" font-family="Liberation Sans" font-size="10" font-weight="normal" fill="#111" >Vorlage</text><circle cx="1878.5" cy="521.5" r="4.3" fill="none" stroke="#333" stroke-width="1.2"/><rect x="1703" y="531" width="194" height="1" fill="#111" /><rect x="1897" y="492" width="15" height="131" fill="#e8e8e8" /><path d="M1901,504 L1904.5,500.5 L1908,504Z" fill="#999"/><path d="M1901,613 L1904.5,616.5 L1908,613Z" fill="#999"/><rect x="1703" y="623" width="194" height="1" fill="#111" /><text x="1712" y="634" font-family="Liberation Sans" font-size="10" font-weight="normal" fill="#1a1a1a" >2 Ebenen</text><rect x="1782.5" y="626.5" width="9" height="7" fill="none" stroke="#666"/><circle cx="1790" cy="633" r="4" fill="#eee" stroke="#222"/><path d="M1790,633 L1790,630 M1790,633 L1787,633" stroke="#222"/><path d="M1812,631 L1818,631 M1815,628 L1815,634" stroke="#222" stroke-width="1.3"/><rect x="1820.5" y="627.5" width="6" height="8" fill="#eee" stroke="#222"/><rect x="1847.5" y="627.5" width="9" height="9" fill="#fff" stroke="#222"/><rect x="1847" y="632" width="5" height="5" fill="#222"/><path d="M1878.5,629.5 L1887.5,629.5 M1879.5,630 L1880.5,637 L1885.5,637 L1886.5,630 M1881,627 L1885,627" stroke="#444" fill="#ddd"/><rect x="1910" y="631" width="1" height="1" fill="#888" /><rect x="1910" y="633" width="1" height="1" fill="#888" /><rect x="1908" y="633" width="1" height="1" fill="#888" /><rect x="1910" y="635" width="1" height="1" fill="#888" /><rect x="1908" y="635" width="1" height="1" fill="#888" /><rect x="1906" y="635" width="1" height="1" fill="#888" /><rect x="1701" y="641" width="214" height="3" fill="#3e3e3e" /><rect x="1701" y="644" width="214" height="17" fill="url(#tabI)" /><rect x="1701" y="661" width="214" height="1" fill="#8a8a8a" /><rect x="1750" y="645" width="1" height="15" fill="#8a8a8a" /><text x="1708" y="656.5" font-family="Liberation Sans" font-size="9.5" font-weight="bold" fill="#2a2a2a" >Verlauf</text><rect x="1751" y="644" width="80" height="18" fill="url(#tabA)" /><path d="M1756,652 L1758.5,649 L1761,652Z M1756,654 L1758.5,657 L1761,654Z" fill="#333"/><text x="1763" y="656.5" font-family="Liberation Sans" font-size="9.5" font-weight="bold" fill="#222" >Transparenz</text><path d="M1898,651 L1902,651 L1900,653Z" fill="#222"/><rect x="1903" y="649" width="9" height="1.2" fill="#222" /><rect x="1903" y="652" width="9" height="1.2" fill="#222" /><rect x="1903" y="655" width="9" height="1.2" fill="#222" /><rect x="1710" y="668" width="92" height="16" fill="#fff" stroke="#c8c8c8"/><rect x="1783" y="668" width="19" height="16" fill="#f4f4f4" /><text x="1713" y="680" font-family="Liberation Sans" font-size="10" font-weight="normal" fill="#111" >Normal</text><path d="M1790,674 L1797,674 L1793.5,678Z" fill="#111"/><text x="1806" y="680" font-family="Liberation Sans" font-size="10" font-weight="normal" fill="#111" >Deckkr.:</text><rect x="1851.5" y="667.5" width="45" height="17" fill="#fff" stroke="#c8c8c8"/><rect x="1880" y="668" width="16" height="16" fill="#ececec" /><text x="1857" y="680" font-family="Liberation Sans" font-size="10" font-weight="normal" fill="#111" >100</text><path d="M1887,672 L1887,679 L1890.5,675.5Z" fill="#222"/><text x="1898" y="680" font-family="Liberation Sans" font-size="10" font-weight="normal" fill="#222" >%</text><rect x="1706" y="689" width="204" height="1" fill="#b8b8b8" /><rect x="1706" y="690" width="204" height="1" fill="#f2f2f2" /><rect x="1708" y="696" width="119" height="56" fill="#d0d0d0" stroke="#f4f4f4"/><rect x="1711.5" y="699.5" width="49" height="49" fill="#fff" stroke="#111" stroke-width="1.2"/><path d="M1713.8,745.7 C1713.8,733 1724,723.8 1736.3,723.8 C1748.5,723.8 1758.6,714 1758.6,702" fill="none" stroke="#111" stroke-width="1.6"/><rect x="1833.5" y="709.5" width="12" height="12" fill="#ececec" stroke="#c4c4c4"/><rect x="1833.5" y="726.5" width="12" height="12" fill="#ececec" stroke="#c4c4c4"/><text x="1848" y="719" font-family="Liberation Sans" font-size="10" font-weight="normal" fill="#8a8a8a" >Maskieren</text><text x="1848" y="736" font-family="Liberation Sans" font-size="10" font-weight="normal" fill="#8a8a8a" >Umkehren</text><rect x="1701" y="758" width="214" height="3" fill="#3e3e3e" /><rect x="1701" y="761" width="214" height="17" fill="url(#tabI)" /><rect x="1701" y="778" width="214" height="1" fill="#8a8a8a" /><rect x="1701" y="761" width="59" height="18" fill="url(#tabA)" /><text x="1708" y="773.5" font-family="Liberation Sans" font-size="9.5" font-weight="bold" fill="#222" >Aussehen</text><rect x="1818" y="762" width="1" height="15" fill="#8a8a8a" /><text x="1766" y="773.5" font-family="Liberation Sans" font-size="9.5" font-weight="bold" fill="#2a2a2a" >Ausrichten</text><rect x="1875" y="762" width="1" height="15" fill="#8a8a8a" /><text x="1825" y="773.5" font-family="Liberation Sans" font-size="9.5" font-weight="bold" fill="#2a2a2a" >Pathfinder</text><path d="M1898,768 L1902,768 L1900,770Z" fill="#222"/><rect x="1903" y="766" width="9" height="1.2" fill="#222" /><rect x="1903" y="769" width="9" height="1.2" fill="#222" /><rect x="1903" y="772" width="9" height="1.2" fill="#222" /><rect x="1703" y="780" width="195" height="1" fill="#111" /><rect x="1703" y="781" width="195" height="95" fill="#d6d6d6" /><rect x="1705.5" y="783.5" width="19" height="19" fill="#fff" stroke="#111" stroke-width="1.2"/><text x="1738" y="797" font-family="Liberation Sans" font-size="10" font-weight="bold" fill="#111" >Pfad</text><rect x="1703" y="804" width="195" height="1" fill="#111" /><rect x="1724" y="804" width="1" height="72" fill="#111" /><rect x="1703" y="829" width="195" height="1" fill="#f4f4f4" /><rect x="1703" y="853" width="195" height="1" fill="#f4f4f4" /><rect x="1704.5" y="807.5" width="16" height="17" fill="#dadada" stroke="#efefef"/><rect x="1704.5" y="831.5" width="16" height="17" fill="#dadada" stroke="#efefef"/><rect x="1704.5" y="855.5" width="16" height="17" fill="#dadada" stroke="#efefef"/><g opacity="1"><ellipse cx="1712.5" cy="816.5" rx="5.5" ry="3.8" fill="#999" stroke="#444" stroke-width="1"/><circle cx="1712.5" cy="816.5" r="2.2" fill="#111"/></g><g opacity="1"><ellipse cx="1712.5" cy="840.5" rx="5.5" ry="3.8" fill="#999" stroke="#444" stroke-width="1"/><circle cx="1712.5" cy="840.5" r="2.2" fill="#111"/></g><g opacity="0.5"><ellipse cx="1712.5" cy="864.5" rx="5.5" ry="3.8" fill="#999" stroke="#444" stroke-width="1"/><circle cx="1712.5" cy="864.5" r="2.2" fill="#111"/></g><path d="M1727.5,811.5 L1733,817.5 L1727.5,823.5Z" fill="#888" stroke="#111" stroke-width="1.2"/><path d="M1727.5,835.5 L1733,841.5 L1727.5,847.5Z" fill="#888" stroke="#111" stroke-width="1.2"/><text x="1738.5" y="821" font-family="Liberation Sans" font-size="10" font-weight="normal" fill="#2929c8" >Kontur:</text><path d="M1738.5,823.5 L1773,823.5" stroke="#2929c8" stroke-dasharray="1,1"/><rect x="1783.5" y="808.5" width="17" height="17" fill="#000" stroke="#111"/><rect x="1784.5" y="809.5" width="15" height="15" fill="#000" stroke="#ddd" stroke-width="0.6"/><text x="1819" y="821" font-family="Liberation Sans" font-size="10" font-weight="normal" fill="#111" >1 pt</text><text x="1737" y="845" font-family="Liberation Sans" font-size="10" font-weight="normal" fill="#111" >Fläche:</text><rect x="1783.5" y="832.5" width="17" height="17" fill="#fff" stroke="#111" stroke-width="1.2"/><path d="M1785.5,847.5 L1798.5,834.5" stroke="#c8102e" stroke-width="1.8"/><text x="1738" y="869" font-family="Liberation Sans" font-size="10" font-weight="normal" fill="#2929c8" >Deckkraft:</text><path d="M1738,871.5 L1786,871.5" stroke="#2929c8" stroke-dasharray="1,1"/><text x="1792" y="869" font-family="Liberation Sans" font-size="10" font-weight="normal" fill="#111" >Standard</text><rect x="1703" y="876" width="195" height="1" fill="#111" /><rect x="1898" y="781" width="14" height="236" fill="#e8e8e8" /><path d="M1902,792 L1905.5,788.5 L1909,792Z" fill="#999"/><path d="M1902,1007 L1905.5,1010.5 L1909,1007Z" fill="#999"/><rect x="1703" y="1017" width="195" height="1" fill="#111" /><rect x="1714" y="1020" width="10" height="10" fill="#333"/><rect x="1717" y="1023" width="4" height="4" fill="#888"/><rect x="1748.5" y="1020.5" width="9" height="10" fill="#fff" stroke="#333"/><text x="1779" y="1030" font-family="Liberation Serif" font-style="italic" font-weight="bold" font-size="13" fill="#333">fx</text><path d="M1795,1030 L1797,1030 L1797,1028Z" fill="#000"/><circle cx="1818.5" cy="1025.5" r="4.5" fill="none" stroke="#444" stroke-width="1.5"/><path d="M1815.5,1022.5 L1821.5,1028.5" stroke="#444" stroke-width="1.5"/><rect x="1848.5" y="1020.5" width="9" height="9" fill="none" stroke="#888"/><rect x="1851" y="1025" width="6" height="5" fill="none" stroke="#888"/><path d="M1878.5,1022.5 L1887.5,1022.5 M1879.5,1023 L1880.5,1030 L1885.5,1030 L1886.5,1023 M1881,1020 L1885,1020" stroke="#777" fill="#ddd"/><rect x="1910" y="1024" width="1" height="1" fill="#888" /><rect x="1910" y="1026" width="1" height="1" fill="#888" /><rect x="1908" y="1026" width="1" height="1" fill="#888" /><rect x="1910" y="1028" width="1" height="1" fill="#888" /><rect x="1908" y="1028" width="1" height="1" fill="#888" /><rect x="1906" y="1028" width="1" height="1" fill="#888" /><rect x="1700" y="1035" width="216" height="1" fill="#505050" /><rect x="1700" y="1036" width="220" height="3" fill="#d8d8d8" /><rect x="1700" y="1039" width="220" height="1" fill="#5a5a5a" /></svg>
</body></html>
